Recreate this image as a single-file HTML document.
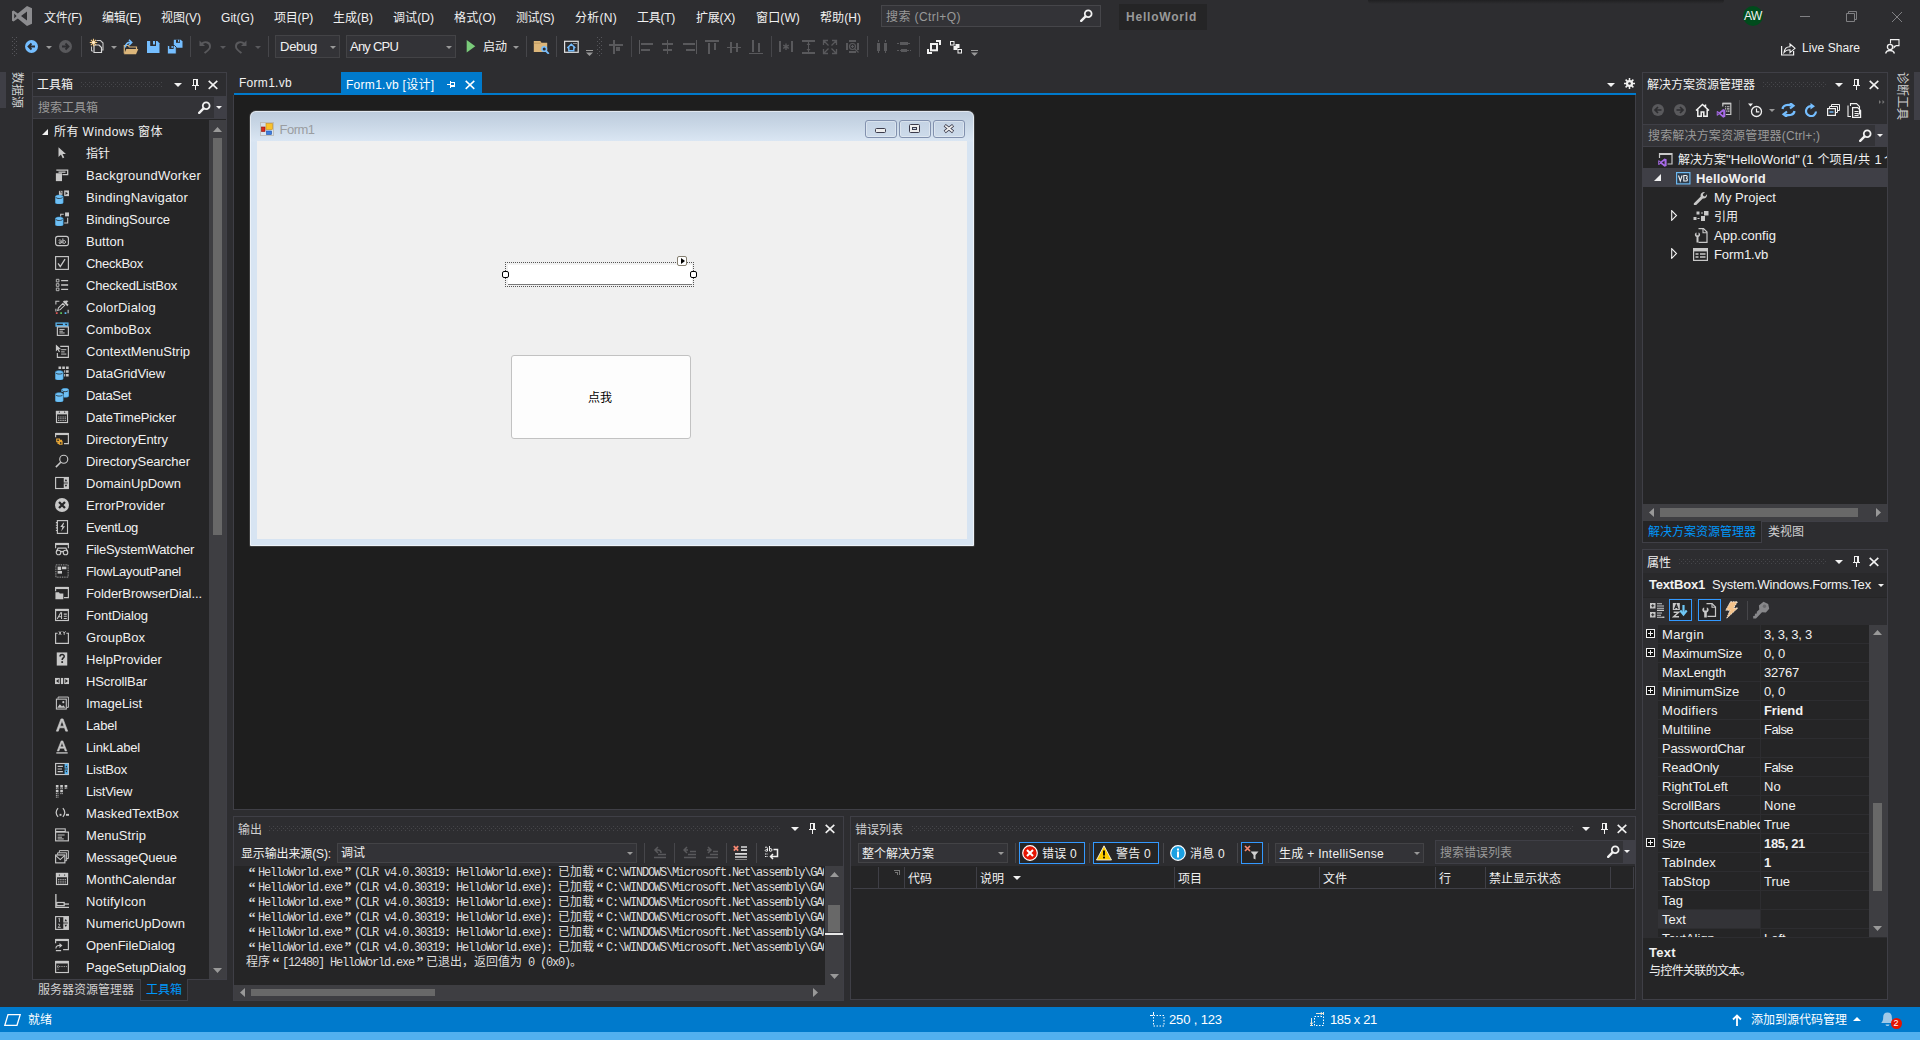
<!DOCTYPE html>
<html lang="zh-CN"><head><meta charset="utf-8"><title>HelloWorld - Microsoft Visual Studio</title>
<style>
html,body{margin:0;padding:0;}
body{width:1920px;height:1040px;overflow:hidden;background:#2d2d30;position:relative;font-family:"Liberation Sans","Noto Sans CJK SC",sans-serif;font-size:12px;color:#f1f1f1;}
.b{position:absolute;box-sizing:border-box;display:block;}
.t{position:absolute;white-space:nowrap;line-height:16px;height:16px;font-size:12px;}
.g{color:#999;}
.mono{font-family:"Liberation Mono","Noto Sans CJK SC",monospace;}
.clip{overflow:hidden;}
.ol{height:15px;line-height:15px;white-space:nowrap;overflow:hidden;color:#dcdcdc;font-size:12px;}
.ol .m{font-family:"Liberation Mono",monospace;font-size:12px;letter-spacing:-1.2px;}
.ol .c{font-family:"Liberation Sans","Noto Sans CJK SC",sans-serif;font-size:12px;}
.ol .q{display:inline-block;width:12px;text-align:center;font-family:"Liberation Serif","Noto Sans CJK SC",serif;font-size:14px;font-weight:bold;line-height:15px;vertical-align:top;}
.ol .qc{font-weight:normal;font-size:12px;}

</style></head>
<body>
<div class="b" style="left:1368px;top:0px;width:356px;height:4px;background:linear-gradient(#202022,#2d2d30);border-radius:0 0 6px 6px;"></div>
<svg class="b" style="left:11px;top:5px;" width="22" height="22" viewBox="0 0 22 22"><path d="M16 1L21 3.2V18.8L16 21L6.8 13.4L2.6 16.6L1 15.8V6.2L2.6 5.4L6.8 8.6ZM16 6.6L10 11L16 15.4ZM3.2 8.4V13.6L5.6 11Z" fill="#8c8c8f" fill-rule="evenodd"/></svg>
<span class="t" style="letter-spacing:-0.27px;left:44px;top:9.5px;">文件(F)</span>
<span class="t" style="letter-spacing:-0.20px;left:102px;top:9.5px;">编辑(E)</span>
<span class="t" style="letter-spacing:0.00px;left:161px;top:9.5px;">视图(V)</span>
<span class="t" style="letter-spacing:0.05px;left:221px;top:9.5px;">Git(G)</span>
<span class="t" style="letter-spacing:-0.20px;left:274px;top:9.5px;">项目(P)</span>
<span class="t" style="letter-spacing:0.00px;left:333px;top:9.5px;">生成(B)</span>
<span class="t" style="letter-spacing:0.07px;left:393px;top:9.5px;">调试(D)</span>
<span class="t" style="letter-spacing:0.13px;left:454px;top:9.5px;">格式(O)</span>
<span class="t" style="letter-spacing:-0.40px;left:516px;top:9.5px;">测试(S)</span>
<span class="t" style="letter-spacing:0.27px;left:575px;top:9.5px;">分析(N)</span>
<span class="t" style="letter-spacing:-0.27px;left:637px;top:9.5px;">工具(T)</span>
<span class="t" style="letter-spacing:-0.20px;left:696px;top:9.5px;">扩展(X)</span>
<span class="t" style="letter-spacing:0.13px;left:756px;top:9.5px;">窗口(W)</span>
<span class="t" style="letter-spacing:0.07px;left:820px;top:9.5px;">帮助(H)</span>
<div class="b" style="left:881px;top:5px;width:220px;height:22px;background:#333337;border:1px solid #46464a;"></div>
<span class="t" style="letter-spacing:0.42px;left:886px;top:9px;color:#999;">搜索 (Ctrl+Q)</span>
<svg class="b" style="left:1080px;top:9px;" width="13" height="13" viewBox="0 0 13 13"><circle cx="8.2" cy="4.8" r="3.4" fill="none" stroke="#f1f1f1" stroke-width="1.8"/><path d="M5.6 7.4L1.2 11.8" stroke="#f1f1f1" stroke-width="2.4" stroke-linecap="round"/></svg>
<div class="b" style="left:1119px;top:4px;width:88px;height:26px;background:#252526;"></div>
<span class="t" style="letter-spacing:0.79px;left:1126px;top:9px;color:#999;font-weight:bold;">HelloWorld</span>
<div class="b" style="left:1743px;top:6px;width:20px;height:20px;background:#004b1c;border-radius:50%;"></div>
<span class="t" style="letter-spacing:-0.45px;left:1744px;top:8px;color:#f1f1f1;">AW</span>
<div class="b" style="left:1800px;top:16px;width:10px;height:1px;background:#808083;"></div>
<svg class="b" style="left:1846px;top:11px;" width="11" height="11" viewBox="0 0 11 11"><path d="M0.5 2.5h8v8h-8zM2.5 2.5v-2h8v8h-2" fill="none" stroke="#808083"/></svg>
<svg class="b" style="left:1892px;top:12px;" width="10" height="10" viewBox="0 0 10 10"><path d="M0 0L10 10M10 0L0 10" stroke="#808083" stroke-width="1" fill="none"/></svg>
<svg class="b" style="left:12px;top:37px;" width="5" height="20" viewBox="0 0 5 20"><defs><pattern id="gp12" width="4" height="4" patternUnits="userSpaceOnUse"><rect x="0" y="0" width="1" height="1" fill="#55555a"/><rect x="2" y="2" width="1" height="1" fill="#55555a"/></pattern></defs><rect width="5" height="20" fill="url(#gp12)"/></svg>
<svg class="b" style="left:25px;top:40px;" width="13" height="13" viewBox="0 0 13 13"><circle cx="6.5" cy="6.5" r="6.5" fill="#75beff"/><path d="M10 6.5H4M6.5 3.5L3.5 6.5L6.5 9.5" stroke="#2d2d30" stroke-width="1.8" fill="none"/></svg>
<svg class="b" style="left:46px;top:46px;" width="6" height="3" viewBox="0 0 6 3"><path d="M0 0H6L3.0 3Z" fill="#999"/></svg>
<svg class="b" style="left:59px;top:40px;" width="13" height="13" viewBox="0 0 13 13"><circle cx="6.5" cy="6.5" r="6.5" fill="#59595c"/><path d="M3 6.5H9M6.5 3.5L9.5 6.5L6.5 9.5" stroke="#2d2d30" stroke-width="1.8" fill="none"/></svg>
<div class="b" style="left:81px;top:36px;width:1px;height:21px;background:#46464a;"></div>
<svg class="b" style="left:89px;top:38px;" width="15" height="16" viewBox="0 0 15 16"><path d="M7.500 2.500h4l2.500 2.500v7h-1.500" fill="none" stroke="#c8c8c8" stroke-width="1.100"/><path d="M5 7h5l2.500 2.500v5h-7.500z" fill="#2d2d30" stroke="#d8d8d8" stroke-width="1.200"/><path d="M2.500 8.500v4.500h1.500" fill="none" stroke="#c8c8c8" stroke-width="1"/><path d="M4.500 0.800v7.400M0.800 4.500h7.400M1.900 1.900l5.200 5.200M7.100 1.900l-5.200 5.200" stroke="#f0c885" stroke-width="1.100"/><circle cx="4.500" cy="4.500" r="1.300" fill="#fdf0d5"/></svg>
<svg class="b" style="left:111px;top:46px;" width="6" height="3" viewBox="0 0 6 3"><path d="M0 0H6L3.0 3Z" fill="#999"/></svg>
<svg class="b" style="left:123px;top:39px;" width="16" height="16" viewBox="0 0 16 16"><path d="M1.300 14.500v-8h4l1 1.500h7.200v2" fill="none" stroke="#dcb67a" stroke-width="1.200"/><path d="M1 15.200l2.300-5.200h12l-2.300 5.200z" fill="#dcb67a"/><path d="M2.300 8.500C2.300 4.500 5 3 8 3.500M6 0.800l2.700 2.700L6 6.200" fill="none" stroke="#75beff" stroke-width="1.600"/></svg>
<svg class="b" style="left:147px;top:41px;" width="13" height="12" viewBox="0 0 13 12"><path d="M0 0h10.300L12.500 2.200V12H0z" fill="#75beff"/><rect x="3.200" y="0" width="5.800" height="5" fill="#2d2d30"/><rect x="6" y="0" width="2" height="3.500" fill="#75beff"/></svg>
<svg class="b" style="left:167px;top:39px;" width="16" height="15" viewBox="0 0 16 15"><path d="M6.800 0.800h7l1.700 1.700v6.300h-8.700z" fill="#75beff"/><rect x="9" y="0.800" width="4" height="3" fill="#2d2d30"/><rect x="11" y="0.800" width="1.300" height="2" fill="#75beff"/><path d="M0.300 6.500h7.200l1.800 1.800v6.700h-9z" fill="#75beff" stroke="#2d2d30" stroke-width="1"/><rect x="2.300" y="7" width="4.300" height="3" fill="#2d2d30"/><rect x="4.500" y="7" width="1.300" height="2" fill="#75beff"/></svg>
<div class="b" style="left:190px;top:36px;width:1px;height:21px;background:#46464a;"></div>
<svg class="b" style="left:199px;top:40px;" width="13" height="14" viewBox="0 0 13 14"><path d="M0.500 0.500v5.500h5.500z" fill="#59595c"/><path d="M2.500 4C6 0.500 11.500 2.500 11 7C10.700 9.800 7.500 11.500 5.500 13" fill="none" stroke="#59595c" stroke-width="1.900"/></svg>
<svg class="b" style="left:220px;top:46px;" width="6" height="3" viewBox="0 0 6 3"><path d="M0 0H6L3.0 3Z" fill="#59595c"/></svg>
<svg class="b" style="left:234px;top:40px;" width="13" height="14" viewBox="0 0 13 14"><path d="M12.500 0.500v5.500h-5.500z" fill="#59595c"/><path d="M10.500 4C7 0.500 1.500 2.500 2 7C2.300 9.800 5.500 11.500 7.500 13" fill="none" stroke="#59595c" stroke-width="1.900"/></svg>
<svg class="b" style="left:255px;top:46px;" width="6" height="3" viewBox="0 0 6 3"><path d="M0 0H6L3.0 3Z" fill="#59595c"/></svg>
<div class="b" style="left:268px;top:36px;width:1px;height:21px;background:#46464a;"></div>
<div class="b" style="left:275px;top:35px;width:65px;height:23px;background:#333337;border:1px solid #434346;"></div>
<span class="t" style="letter-spacing:-0.26px;left:280px;top:38.5px;font-size:13px;">Debug</span>
<svg class="b" style="left:330px;top:46px;" width="6" height="3" viewBox="0 0 6 3"><path d="M0 0H6L3.0 3Z" fill="#999"/></svg>
<div class="b" style="left:346px;top:35px;width:110px;height:23px;background:#333337;border:1px solid #434346;"></div>
<span class="t" style="letter-spacing:-0.78px;left:350px;top:38.5px;font-size:13px;">Any CPU</span>
<svg class="b" style="left:446px;top:46px;" width="6" height="3" viewBox="0 0 6 3"><path d="M0 0H6L3.0 3Z" fill="#999"/></svg>
<svg class="b" style="left:466px;top:40px;" width="10" height="13" viewBox="0 0 10 13"><path d="M0.700 0L9.300 6.200L0.700 12.400Z" fill="#7acb7a"/></svg>
<span class="t" style="letter-spacing:-0.01px;left:483px;top:38.5px;">启动</span>
<svg class="b" style="left:513px;top:46px;" width="6" height="3" viewBox="0 0 6 3"><path d="M0 0H6L3.0 3Z" fill="#999"/></svg>
<div class="b" style="left:526px;top:36px;width:1px;height:21px;background:#46464a;"></div>
<svg class="b" style="left:533px;top:40px;" width="17" height="14" viewBox="0 0 17 14"><path d="M0.800 1h6.500l1.200 1.800h5.700v9.200h-13.400z" fill="#dcb67a"/><path d="M0.800 3.200h7" stroke="#b8935a" stroke-width="0.800"/><circle cx="11.200" cy="9" r="2.300" fill="#2d2d30" stroke="#75beff" stroke-width="1.500"/><path d="M12.800 10.800l3 3" stroke="#75beff" stroke-width="1.800"/></svg>
<div class="b" style="left:556px;top:36px;width:1px;height:21px;background:#46464a;"></div>
<svg class="b" style="left:564px;top:40px;" width="15" height="13" viewBox="0 0 15 13"><rect x="0.600" y="1.300" width="13.600" height="11" fill="none" stroke="#e0e0e0" stroke-width="1.200"/><path d="M3.300 8L7.300 4.300L11.300 8M4.800 7.300v3.500h5v-3.500" fill="none" stroke="#75beff" stroke-width="1.400"/><rect x="9.500" y="3" width="1" height="1" fill="#f1f1f1"/><rect x="11.500" y="3" width="1" height="1" fill="#f1f1f1"/></svg>
<svg class="b" style="left:586px;top:50px;" width="7" height="6" viewBox="0 0 7 6"><rect x="0" y="0" width="7" height="1" fill="#999"/><path d="M0 2.500h7l-3.500 3.500z" fill="#999"/></svg>
<svg class="b" style="left:597px;top:37px;" width="5" height="20" viewBox="0 0 5 20"><defs><pattern id="gp597" width="4" height="4" patternUnits="userSpaceOnUse"><rect x="0" y="0" width="1" height="1" fill="#55555a"/><rect x="2" y="2" width="1" height="1" fill="#55555a"/></pattern></defs><rect width="5" height="20" fill="url(#gp597)"/></svg>
<svg class="b" style="left:604px;top:36px;" width="380" height="22" viewBox="604 36 380 22"><rect x="613" y="40" width="2" height="14" fill="#59595c"/><rect x="609" y="44" width="14" height="2" fill="#59595c"/><rect x="616" y="47" width="4" height="4" fill="#59595c"/><rect x="639" y="40" width="1" height="14" fill="#59595c"/><rect x="641" y="43" width="12" height="2" fill="#59595c"/><rect x="641" y="49" width="9" height="2" fill="#59595c"/><rect x="667" y="40" width="1" height="14" fill="#59595c"/><rect x="662" y="43" width="11" height="2" fill="#59595c"/><rect x="663" y="49" width="9" height="2" fill="#59595c"/><rect x="696" y="40" width="1" height="14" fill="#59595c"/><rect x="683" y="43" width="12" height="2" fill="#59595c"/><rect x="686" y="49" width="9" height="2" fill="#59595c"/><rect x="705" y="40" width="14" height="2" fill="#59595c"/><rect x="708" y="43" width="2" height="11" fill="#59595c"/><rect x="714" y="43" width="2" height="7" fill="#59595c"/><rect x="727" y="47" width="14" height="1" fill="#59595c"/><rect x="730" y="42" width="2" height="11" fill="#59595c"/><rect x="736" y="43" width="2" height="9" fill="#59595c"/><rect x="749" y="53" width="14" height="1" fill="#59595c"/><rect x="752" y="40" width="2" height="12" fill="#59595c"/><rect x="758" y="43" width="2" height="9" fill="#59595c"/><rect x="779" y="41" width="2" height="11" fill="#59595c"/><rect x="791" y="41" width="2" height="11" fill="#59595c"/><path d="M786 43.500v6.500M783.200 45.200l5.600 3.200M788.800 45.200l-5.600 3.200" stroke="#59595c" stroke-width="1.400" fill="none"/><rect x="802" y="40" width="13" height="2" fill="#59595c"/><rect x="802" y="52" width="13" height="2" fill="#59595c"/><rect x="808" y="42" width="1" height="10" fill="#59595c"/><path d="M806.500 45l2-2.500l2 2.500zM806.500 49l2 2.500l2-2.500z" fill="#59595c"/><path d="M823.500 45v-4.500h4.500M832 40.500h4.500v4.500M836.500 49v4.500h-4.500M828 53.500h-4.500v-4.500M824 41l4.500 4.500M836 41l-4.500 4.500M824 53l4.500-4.500M836 53l-4.500-4.500" stroke="#59595c" stroke-width="1.300" fill="none"/><rect x="849" y="40" width="7" height="2" fill="#59595c"/><rect x="849" y="51" width="7" height="2" fill="#59595c"/><rect x="846" y="43" width="2" height="7" fill="#59595c"/><rect x="857" y="43" width="2" height="7" fill="#59595c"/><circle cx="852.500" cy="46.500" r="3" fill="none" stroke="#59595c" stroke-width="1.200"/><path d="M851 46.500h3M852.500 45v3M855 49l3.500 3.500" stroke="#59595c" stroke-width="1.100"/><rect x="877" y="43" width="3" height="8" fill="#59595c"/><rect x="884" y="43" width="3" height="8" fill="#59595c"/><path d="M878.500 40v3M878.500 51v3M885.500 40v3M885.500 51v3" stroke="#59595c" stroke-width="1" stroke-dasharray="2 1"/><rect x="900" y="42" width="8" height="3" fill="#59595c"/><rect x="901" y="49" width="6" height="3" fill="#59595c"/><path d="M897 43.500h3M908 43.500h3M897 50.500h4M907 50.500h4" stroke="#59595c" stroke-width="1" stroke-dasharray="2 1"/><rect x="931" y="44" width="6" height="6.300" fill="none" stroke="#f1f1f1" stroke-width="2"/><rect x="936" y="40" width="5" height="2" fill="#f1f1f1"/><rect x="939" y="40" width="2" height="5" fill="#f1f1f1"/><rect x="927" y="49" width="2" height="5" fill="#f1f1f1"/><rect x="927" y="52" width="5" height="2" fill="#f1f1f1"/><rect x="950.500" y="41.500" width="3.500" height="3.500" fill="none" stroke="#f1f1f1" stroke-width="1"/><rect x="953.5" y="46" width="4" height="4" fill="#f1f1f1"/><rect x="955.5" y="44" width="4" height="4" fill="#f1f1f1"/><rect x="958" y="49.500" width="3.500" height="3.500" fill="none" stroke="#f1f1f1" stroke-width="1"/></svg>
<div class="b" style="left:631px;top:36px;width:1px;height:21px;background:#46464a;"></div>
<div class="b" style="left:771px;top:36px;width:1px;height:21px;background:#46464a;"></div>
<div class="b" style="left:867px;top:36px;width:1px;height:21px;background:#46464a;"></div>
<div class="b" style="left:919px;top:36px;width:1px;height:21px;background:#46464a;"></div>
<svg class="b" style="left:971px;top:50px;" width="7" height="6" viewBox="0 0 7 6"><rect x="0" y="0" width="7" height="1" fill="#999"/><path d="M0 2.500h7l-3.500 3.500z" fill="#999"/></svg>
<svg class="b" style="left:1781px;top:42px;" width="15" height="14" viewBox="0 0 15 14"><path d="M0.600 4v9h12v-4" fill="none" stroke="#f1f1f1" stroke-width="1.200"/><path d="M3 10.500C3.500 6.500 6 4.800 9 4.800V2l5 4.300l-5 4.300V7.800C6.500 7.800 4.500 8.500 3 10.500z" fill="none" stroke="#f1f1f1" stroke-width="1.100"/></svg>
<span class="t" style="letter-spacing:0.06px;left:1802px;top:40px;">Live Share</span>
<svg class="b" style="left:1885px;top:39px;" width="15" height="15" viewBox="0 0 15 15"><path d="M5.500 4.500V0.600h8.500v6h-3l-2 2v-2" fill="none" stroke="#f1f1f1" stroke-width="1.100"/><circle cx="5" cy="8" r="2.600" fill="none" stroke="#f1f1f1" stroke-width="1.300"/><path d="M0.600 14.500C1.500 10.500 8.500 10.500 9.400 14.500" fill="none" stroke="#f1f1f1" stroke-width="1.300"/></svg>
<div class="b" style="left:0px;top:72px;width:6px;height:36px;background:#3f3f46;"></div>
<span class="t" style="left:9px;top:72px;transform-origin:0 0;transform:translate(16px,0) rotate(90deg);color:#d0d0d0;">数据源</span>
<div class="b" style="left:32px;top:72px;width:195px;height:908px;background:#252526;border:1px solid #3f3f46;"></div>
<div class="b" style="left:33px;top:73px;width:193px;height:23px;background:#2d2d30;"></div>
<span class="t" style="letter-spacing:-0.01px;left:37px;top:76.5px;">工具箱</span>
<svg class="b" style="left:81px;top:82px;" width="82" height="5" viewBox="0 0 82 5"><defs><pattern id="dp81_82" width="4" height="4" patternUnits="userSpaceOnUse"><rect x="0" y="0" width="1" height="1" fill="#46464a"/><rect x="2" y="2" width="1" height="1" fill="#46464a"/></pattern></defs><rect width="82" height="5" fill="url(#dp81_82)"/></svg>
<svg class="b" style="left:174px;top:83px;" width="8" height="4" viewBox="0 0 8 4"><path d="M0 0H8L4.0 4Z" fill="#f1f1f1"/></svg>
<svg class="b" style="left:192px;top:79px;" width="7" height="11" viewBox="0 0 7 11"><rect x="1" y="0" width="1" height="6" fill="#f1f1f1"/><rect x="1" y="0" width="5" height="1" fill="#f1f1f1"/><rect x="4" y="0" width="2" height="6" fill="#f1f1f1"/><rect x="0" y="6" width="7" height="1" fill="#f1f1f1"/><rect x="3" y="7" width="1" height="4" fill="#f1f1f1"/></svg>
<svg class="b" style="left:208px;top:80px;" width="10" height="10" viewBox="0 0 10 10"><path d="M0.700 0.900L9.300 8.900M9.300 0.900L0.700 8.900" stroke="#f1f1f1" stroke-width="1.5999999999999999" fill="none"/></svg>
<div class="b" style="left:33px;top:96px;width:193px;height:23px;background:#333337;border:1px solid #3f3f46;border-left:0;border-right:0;"></div>
<div class="b" style="left:214px;top:97px;width:12px;height:21px;background:#3f3f46;"></div>
<span class="t" style="letter-spacing:-0.00px;left:38px;top:99.5px;color:#999;">搜索工具箱</span>
<svg class="b" style="left:198px;top:101px;" width="13" height="13" viewBox="0 0 13 13"><circle cx="8.2" cy="4.8" r="3.4" fill="none" stroke="#f1f1f1" stroke-width="1.8"/><path d="M5.6 7.4L1.2 11.8" stroke="#f1f1f1" stroke-width="2.4" stroke-linecap="round"/></svg>
<svg class="b" style="left:216px;top:106px;" width="6" height="3" viewBox="0 0 6 3"><path d="M0 0H6L3.0 3Z" fill="#f1f1f1"/></svg>
<div class="b" style="left:209px;top:120px;width:17px;height:859px;background:#3e3e42;"></div>
<svg class="b" style="left:213px;top:127px;" width="9" height="5" viewBox="0 0 9 5"><path d="M0 5H9L4.5 0Z" fill="#999"/></svg>
<div class="b" style="left:213px;top:138px;width:9px;height:397px;background:#686868;"></div>
<svg class="b" style="left:213px;top:968px;" width="9" height="5" viewBox="0 0 9 5"><path d="M0 0H9L4.5 5Z" fill="#999"/></svg>
<svg class="b" style="left:42px;top:129px;" width="6" height="6" viewBox="0 0 6 6"><path d="M6 0V6H0Z" fill="#f1f1f1"/></svg>
<span class="t" style="letter-spacing:0.43px;left:54px;top:123.5px;">所有 Windows 窗体</span>
<svg class="b" style="left:55px;top:146px;" width="14" height="14" viewBox="0 0 16 16"><path d="M4 1.500v11l2.800-2.800l2 4.300l1.800-0.800l-2-4.200h3.900z" fill="#c8c8c8"/></svg>
<span class="t" style="letter-spacing:-0.01px;left:86px;top:145.5px;">指针</span>
<svg class="b" style="left:55px;top:168px;" width="14" height="14" viewBox="0 0 16 16"><path d="M1.500 2.500h13v5h-6" fill="none" stroke="#c8c8c8" stroke-width="1.400"/><rect x="4" y="4" width="8" height="1.500" fill="#c8c8c8"/><rect x="1" y="6" width="7" height="9" fill="#c8c8c8"/></svg>
<span class="t" style="letter-spacing:0.25px;left:86px;top:167.5px;font-size:13px;">BackgroundWorker</span>
<svg class="b" style="left:55px;top:190px;" width="14" height="14" viewBox="0 0 16 16"><path d="M0.3 7.6c0-2.4000000000000004 9-2.4000000000000004 9 0v6.8c0 2.4000000000000004-9 2.4000000000000004-9 0z" fill="#6fc0f5" stroke="#3d9bd9" stroke-width="0.600"/><path d="M1.1 8.4c0 1.7600000000000002 7.4 1.7600000000000002 7.4 0" fill="none" stroke="#252526" stroke-width="0.900"/><rect x="4.500" y="1" width="4" height="4.500" fill="#c8c8c8"/><path d="M5.500 2l1.500 0l0 2" stroke="#252526" fill="none" stroke-width="0.900"/><rect x="10.500" y="0.500" width="5.500" height="6.500" fill="#c8c8c8"/><path d="M12 2l2.800 1.800l-2.800 1.800z" fill="#252526"/></svg>
<span class="t" style="letter-spacing:0.19px;left:86px;top:189.5px;font-size:13px;">BindingNavigator</span>
<svg class="b" style="left:55px;top:212px;" width="14" height="14" viewBox="0 0 16 16"><path d="M0.3 7.6c0-2.4000000000000004 9-2.4000000000000004 9 0v6.8c0 2.4000000000000004-9 2.4000000000000004-9 0z" fill="#6fc0f5" stroke="#3d9bd9" stroke-width="0.600"/><path d="M1.1 8.4c0 1.7600000000000002 7.4 1.7600000000000002 7.4 0" fill="none" stroke="#252526" stroke-width="0.900"/><rect x="11.500" y="0.500" width="4.500" height="4.500" fill="#c8c8c8"/><path d="M6.500 5V2.500h3.500M14.500 6.500v6h-4" fill="none" stroke="#c8c8c8" stroke-width="1.200"/></svg>
<span class="t" style="letter-spacing:-0.04px;left:86px;top:211.5px;font-size:13px;">BindingSource</span>
<svg class="b" style="left:55px;top:234px;" width="14" height="14" viewBox="0 0 16 16"><rect x="0.700" y="2.700" width="14.600" height="10.600" rx="2.500" fill="none" stroke="#c8c8c8" stroke-width="1.300"/><path d="M4.200 7.300c2-1.200 3 -0.300 3 1v2.200M7.200 9c-3-0.500-3.500 1.800-1.500 1.800c0.800 0 1.500-0.600 1.500-1.200M9 5v5.800M9 8.500c0.500-1.600 3-1.600 3 0.600c0 2.200-2.500 2.200-3 0.600" fill="none" stroke="#c8c8c8" stroke-width="1.100"/></svg>
<span class="t" style="letter-spacing:0.07px;left:86px;top:233.5px;font-size:13px;">Button</span>
<svg class="b" style="left:55px;top:256px;" width="14" height="14" viewBox="0 0 16 16"><rect x="0.700" y="0.700" width="14.600" height="14.600" fill="none" stroke="#c8c8c8" stroke-width="1.300"/><path d="M3.500 8.500l2.500 3.500l5.500-8.500" fill="none" stroke="#c8c8c8" stroke-width="1.500"/></svg>
<span class="t" style="letter-spacing:-0.28px;left:86px;top:255.5px;font-size:13px;">CheckBox</span>
<svg class="b" style="left:55px;top:278px;" width="14" height="14" viewBox="0 0 16 16"><path d="M1.500 1.500h3v3h-3zM1.500 6.500h3v3h-3zM1.500 11.500h3v3h-3z" fill="none" stroke="#c8c8c8"/><path d="M7 3h8M7 8h8M7 13h8" stroke="#c8c8c8" stroke-width="1.600"/></svg>
<span class="t" style="letter-spacing:-0.21px;left:86px;top:277.5px;font-size:13px;">CheckedListBox</span>
<svg class="b" style="left:55px;top:300px;" width="14" height="14" viewBox="0 0 16 16"><path d="M1 5V1.500h4M11 1.500h4M15 11v4M1 10v3" fill="none" stroke="#c8c8c8" stroke-width="1.200" /><path d="M3 12l1-3l5-5l2 2l-5 5z" fill="none" stroke="#c8c8c8" stroke-width="1.200"/><path d="M9 2l5 5l1.500-1.500l-2-2l1-1.500l-1.500-1.500l-1.500 1l-1-1z" fill="#c8c8c8"/><rect x="1" y="14" width="2" height="2" fill="#e05555"/><rect x="6" y="14" width="2" height="2" fill="#5bc45b"/><rect x="11" y="14" width="2" height="2" fill="#59b4ee"/></svg>
<span class="t" style="letter-spacing:0.19px;left:86px;top:299.5px;font-size:13px;">ColorDialog</span>
<svg class="b" style="left:55px;top:322px;" width="14" height="14" viewBox="0 0 16 16"><rect x="0.500" y="0.500" width="15" height="5" fill="#59b4ee"/><rect x="2" y="2" width="7" height="1.500" fill="#252526"/><path d="M11 2h3.500l-1.750 2z" fill="#252526"/><rect x="2.700" y="5.700" width="12.600" height="9.600" fill="none" stroke="#c8c8c8" stroke-width="1.300"/><path d="M5 8.500h6M5 10.500h4M5 12.500h6" stroke="#c8c8c8" stroke-width="1.100"/></svg>
<span class="t" style="letter-spacing:0.09px;left:86px;top:321.5px;font-size:13px;">ComboBox</span>
<svg class="b" style="left:55px;top:344px;" width="14" height="14" viewBox="0 0 16 16"><path d="M6 2.700h9.300v12.600h-12.600v-5" fill="none" stroke="#c8c8c8" stroke-width="1.300"/><path d="M7 6.500h6M7 9h4M7 11.500h6" stroke="#c8c8c8" stroke-width="1.100"/><path d="M1 0.500v8l2-2l1.500 3l1.200-0.600l-1.500-2.900h2.800z" fill="#c8c8c8"/></svg>
<span class="t" style="letter-spacing:-0.00px;left:86px;top:343.5px;font-size:13px;">ContextMenuStrip</span>
<svg class="b" style="left:55px;top:366px;" width="14" height="14" viewBox="0 0 16 16"><path d="M0.3 7.1c0-2.4000000000000004 9-2.4000000000000004 9 0v7.3c0 2.4000000000000004-9 2.4000000000000004-9 0z" fill="#6fc0f5" stroke="#3d9bd9" stroke-width="0.600"/><path d="M1.1 7.8999999999999995c0 1.7600000000000002 7.4 1.7600000000000002 7.4 0" fill="none" stroke="#252526" stroke-width="0.900"/><path d="M4 0.500h3v3h-3zM8.300 0.500h3v3h-3zM12.600 0.500h3v3h-3zM12.600 4.800h3v3h-3zM12.600 9.100h3v3h-3zM10.500 4.800h1.200v3h-1.200zM10.500 9.100h1.200v3h-1.200z" fill="#c8c8c8"/></svg>
<span class="t" style="letter-spacing:-0.08px;left:86px;top:365.5px;font-size:13px;">DataGridView</span>
<svg class="b" style="left:55px;top:388px;" width="14" height="14" viewBox="0 0 16 16"><path d="M7.5 2.1c0-2.4000000000000004 8.3-2.4000000000000004 8.3 0v6.8c0 2.4000000000000004-8.3 2.4000000000000004-8.3 0z" fill="#6fc0f5" stroke="#3d9bd9" stroke-width="0.600"/><path d="M8.3 2.9000000000000004c0 1.7600000000000002 6.700000000000001 1.7600000000000002 6.700000000000001 0" fill="none" stroke="#252526" stroke-width="0.900"/><rect x="0" y="4.500" width="9.800" height="2.500" fill="#252526"/><rect x="8.800" y="5" width="1" height="11" fill="#252526"/><path d="M0.3 7.1c0-2.4000000000000004 9-2.4000000000000004 9 0v7.3c0 2.4000000000000004-9 2.4000000000000004-9 0z" fill="#6fc0f5" stroke="#3d9bd9" stroke-width="0.600"/><path d="M1.1 7.8999999999999995c0 1.7600000000000002 7.4 1.7600000000000002 7.4 0" fill="none" stroke="#252526" stroke-width="0.900"/></svg>
<span class="t" style="letter-spacing:-0.28px;left:86px;top:387.5px;font-size:13px;">DataSet</span>
<svg class="b" style="left:55px;top:410px;" width="14" height="14" viewBox="0 0 16 16"><rect x="1.700" y="1.700" width="12.600" height="12.600" fill="none" stroke="#c8c8c8" stroke-width="1.300"/><rect x="1" y="1" width="14" height="4" fill="#c8c8c8"/><path d="M4 2.500l1.500 1l-0 -2zM12 2.500l-1.500 1l0-2z" fill="#252526"/><path d="M3.500 8h9M3.500 10h9M3.500 12h9" stroke="#c8c8c8" stroke-width="1" stroke-dasharray="1.500 1"/></svg>
<span class="t" style="letter-spacing:-0.14px;left:86px;top:409.5px;font-size:13px;">DateTimePicker</span>
<svg class="b" style="left:55px;top:432px;" width="14" height="14" viewBox="0 0 16 16"><path d="M0.700 6V1.700h14.600v11.600h-5" fill="none" stroke="#c8c8c8" stroke-width="1.300"/><rect x="0.700" y="1" width="14.600" height="2.500" fill="#c8c8c8"/><path d="M2 8h3v3h-3zM5 11h3v3h-3zM3.500 11v2h1.500M5 9.500h2.500v1.500" fill="none" stroke="#e8a838" stroke-width="1.300"/></svg>
<span class="t" style="letter-spacing:-0.03px;left:86px;top:431.5px;font-size:13px;">DirectoryEntry</span>
<svg class="b" style="left:55px;top:454px;" width="14" height="14" viewBox="0 0 16 16"><circle cx="10" cy="6" r="4.600" fill="none" stroke="#c8c8c8" stroke-width="1.300"/><path d="M6.500 9.500l-5.500 5.500" stroke="#c8c8c8" stroke-width="1.800"/></svg>
<span class="t" style="letter-spacing:-0.05px;left:86px;top:453.5px;font-size:13px;">DirectorySearcher</span>
<svg class="b" style="left:55px;top:476px;" width="14" height="14" viewBox="0 0 16 16"><rect x="0.700" y="1.700" width="14.600" height="12.600" fill="none" stroke="#c8c8c8" stroke-width="1.300"/><rect x="10" y="2" width="5" height="5.500" fill="#c8c8c8"/><rect x="10" y="8.500" width="5" height="5.500" fill="#c8c8c8"/><path d="M11 6l1.500-2.500l1.500 2.500zM11 10l1.500 2.500l1.500-2.500z" fill="#252526"/></svg>
<span class="t" style="letter-spacing:0.03px;left:86px;top:475.5px;font-size:13px;">DomainUpDown</span>
<svg class="b" style="left:55px;top:498px;" width="14" height="14" viewBox="0 0 16 16"><circle cx="8" cy="8" r="8" fill="#c8c8c8"/><path d="M4.600 4.600l6.800 6.800M11.400 4.600l-6.800 6.800" stroke="#252526" stroke-width="2.600"/></svg>
<span class="t" style="letter-spacing:0.13px;left:86px;top:497.5px;font-size:13px;">ErrorProvider</span>
<svg class="b" style="left:55px;top:520px;" width="14" height="14" viewBox="0 0 16 16"><rect x="2.700" y="0.700" width="11.600" height="14.600" fill="none" stroke="#c8c8c8" stroke-width="1.300"/><path d="M1 3h2M1 6h2M1 9h2M1 12h2" stroke="#c8c8c8" stroke-width="1.200"/><path d="M9.500 3l-3.500 5h2.500l-1.500 5l4.500-6h-2.500l1.500-4z" fill="#c8c8c8"/></svg>
<span class="t" style="letter-spacing:-0.37px;left:86px;top:519.5px;font-size:13px;">EventLog</span>
<svg class="b" style="left:55px;top:542px;" width="14" height="14" viewBox="0 0 16 16"><path d="M0.700 7V1.700h14.600v5.300" fill="none" stroke="#c8c8c8" stroke-width="1.300"/><rect x="0.700" y="1" width="14.600" height="2.500" fill="#c8c8c8"/><circle cx="4" cy="12" r="2.600" fill="none" stroke="#c8c8c8" stroke-width="1.300"/><circle cx="12" cy="12" r="2.600" fill="none" stroke="#c8c8c8" stroke-width="1.300"/><path d="M1.500 11l2-4h9l2 4M6.500 11.500c1-1 2-1 3 0" fill="none" stroke="#c8c8c8" stroke-width="1.300"/></svg>
<span class="t" style="letter-spacing:-0.25px;left:86px;top:541.5px;font-size:13px;">FileSystemWatcher</span>
<svg class="b" style="left:55px;top:564px;" width="14" height="14" viewBox="0 0 16 16"><rect x="1" y="1" width="14" height="14" fill="none" stroke="#c8c8c8" stroke-width="1" stroke-dasharray="1 1"/><rect x="3" y="3" width="4" height="4" fill="#c8c8c8"/><rect x="8" y="3" width="5" height="3" fill="#c8c8c8"/><rect x="3" y="8" width="5" height="3" fill="#c8c8c8"/></svg>
<span class="t" style="letter-spacing:-0.32px;left:86px;top:563.5px;font-size:13px;">FlowLayoutPanel</span>
<svg class="b" style="left:55px;top:586px;" width="14" height="14" viewBox="0 0 16 16"><path d="M0.700 6V1.700h14.600v11.600h-5" fill="none" stroke="#c8c8c8" stroke-width="1.300"/><rect x="0.700" y="1" width="14.600" height="2.500" fill="#c8c8c8"/><path d="M0.500 7h4l1 1.500h4v6.500h-9z" fill="#c8c8c8"/></svg>
<span class="t" style="letter-spacing:-0.09px;left:86px;top:585.5px;font-size:13px;">FolderBrowserDial...</span>
<svg class="b" style="left:55px;top:608px;" width="14" height="14" viewBox="0 0 16 16"><rect x="0.700" y="1.700" width="14.600" height="12.600" fill="none" stroke="#c8c8c8" stroke-width="1.300"/><rect x="0.700" y="1" width="14.600" height="2.500" fill="#c8c8c8"/><path d="M2.500 12.500l4-7h1v7M4 10h3.500M10 7h3.500M10 9.500h3.500M10 12h3.500" fill="none" stroke="#c8c8c8" stroke-width="1.200"/></svg>
<span class="t" style="letter-spacing:-0.09px;left:86px;top:607.5px;font-size:13px;">FontDialog</span>
<svg class="b" style="left:55px;top:630px;" width="14" height="14" viewBox="0 0 16 16"><path d="M3 3.700h-2.300v11.600h14.600v-11.600h-2.300" fill="none" stroke="#c8c8c8" stroke-width="1.300"/><path d="M4.500 1.500l2.500 4M7 1.500l-2.500 4M9 1.500l1.500 2l1.500-2M10.500 3.500v2" fill="none" stroke="#c8c8c8" stroke-width="1.100"/></svg>
<span class="t" style="letter-spacing:0.06px;left:86px;top:629.5px;font-size:13px;">GroupBox</span>
<svg class="b" style="left:55px;top:652px;" width="14" height="14" viewBox="0 0 16 16"><rect x="2" y="0.500" width="12" height="15" fill="#c8c8c8"/><path d="M5.800 5.200c0-3 4.700-3 4.700-0.200c0 1.800-2.300 1.800-2.300 4" fill="none" stroke="#252526" stroke-width="1.800"/><rect x="7.200" y="10.500" width="2" height="2" fill="#252526"/></svg>
<span class="t" style="letter-spacing:0.07px;left:86px;top:651.5px;font-size:13px;">HelpProvider</span>
<svg class="b" style="left:55px;top:674px;" width="14" height="14" viewBox="0 0 16 16"><rect x="0" y="4.500" width="5.500" height="7" fill="#c8c8c8"/><rect x="6.700" y="4.500" width="2.600" height="7" fill="#c8c8c8"/><rect x="10.500" y="4.500" width="5.500" height="7" fill="#c8c8c8"/><path d="M4.200 5.800v4.400l-3-2.200zM11.800 5.800v4.400l3-2.200z" fill="#252526"/></svg>
<span class="t" style="letter-spacing:-0.11px;left:86px;top:673.5px;font-size:13px;">HScrollBar</span>
<svg class="b" style="left:55px;top:696px;" width="14" height="14" viewBox="0 0 16 16"><path d="M3.500 3v-1.800h11.800v11.800h-1.800" fill="none" stroke="#c8c8c8" stroke-width="1.100"/><rect x="1.600" y="3.600" width="11.300" height="11.300" fill="none" stroke="#c8c8c8" stroke-width="1.200"/><path d="M2.500 13.500l3-4l2.500 2.500l1.500-1.500l2.500 3z" fill="#c8c8c8"/><circle cx="9.500" cy="7" r="1.200" fill="#c8c8c8"/></svg>
<span class="t" style="letter-spacing:-0.04px;left:86px;top:695.5px;font-size:13px;">ImageList</span>
<svg class="b" style="left:55px;top:718px;" width="14" height="14" viewBox="0 0 16 16"><path d="M1.500 15L6.800 1h2.400L14.500 15h-2.300l-1.300-3.800H5.100L3.800 15zM5.800 9.300h4.400L8 3z" fill="#c8c8c8" stroke="#c8c8c8" stroke-width="0.700"/></svg>
<span class="t" style="letter-spacing:-0.16px;left:86px;top:717.5px;font-size:13px;">Label</span>
<svg class="b" style="left:55px;top:740px;" width="14" height="14" viewBox="0 0 16 16"><path d="M2.500 12.500L7 1h2l4.500 11.500h-2l-1.100-3H5.600l-1.100 3zM6.200 7.800h3.600L8 2.800z" fill="#c8c8c8" stroke="#c8c8c8" stroke-width="0.600"/><rect x="1.500" y="14" width="13" height="1.500" fill="#c8c8c8"/></svg>
<span class="t" style="letter-spacing:-0.18px;left:86px;top:739.5px;font-size:13px;">LinkLabel</span>
<svg class="b" style="left:55px;top:762px;" width="14" height="14" viewBox="0 0 16 16"><rect x="0.700" y="1.700" width="14.600" height="12.600" fill="none" stroke="#c8c8c8" stroke-width="1.300"/><path d="M3 5h6M3 8h5M3 11h6" stroke="#c8c8c8" stroke-width="1.300"/><rect x="11" y="2" width="4" height="5.500" fill="#59b4ee"/><rect x="11" y="8.500" width="4" height="5.500" fill="#59b4ee"/><path d="M11.800 6l1.200-2l1.200 2zM11.800 10l1.200 2l1.200-2z" fill="#252526"/></svg>
<span class="t" style="letter-spacing:-0.23px;left:86px;top:761.5px;font-size:13px;">ListBox</span>
<svg class="b" style="left:55px;top:784px;" width="14" height="14" viewBox="0 0 16 16"><path d="M1 1h3v3h-3zM6 1h3v3h-3zM11 1h3v3h-3zM1 6.500h3v3h-3zM6 6.500h3v3h-3z" fill="#c8c8c8"/><path d="M1 5h3M6 5h3M11 5h3M1 11h3M6 11h3M1 13h3M1 15h3" stroke="#c8c8c8" stroke-width="1" stroke-dasharray="1.500 0.500"/></svg>
<span class="t" style="letter-spacing:-0.27px;left:86px;top:783.5px;font-size:13px;">ListView</span>
<svg class="b" style="left:55px;top:806px;" width="14" height="14" viewBox="0 0 16 16"><path d="M3.500 2.500c-2.600 3-2.600 7 0 10M9 2.500c2.600 3 2.600 7 0 10" fill="none" stroke="#c8c8c8" stroke-width="1.400"/><rect x="5.200" y="9" width="2.200" height="2.200" fill="#c8c8c8"/><rect x="12.500" y="9" width="3.500" height="2.200" fill="#c8c8c8"/></svg>
<span class="t" style="letter-spacing:0.09px;left:86px;top:805.5px;font-size:13px;">MaskedTextBox</span>
<svg class="b" style="left:55px;top:828px;" width="14" height="14" viewBox="0 0 16 16"><rect x="0.700" y="1" width="11" height="3" fill="none" stroke="#c8c8c8" stroke-width="1.200"/><rect x="0.700" y="4.700" width="14.600" height="10" fill="none" stroke="#c8c8c8" stroke-width="1.300"/><path d="M3 8h8M3 10.500h5M3 12.500h7" stroke="#c8c8c8" stroke-width="1.100"/></svg>
<span class="t" style="letter-spacing:0.08px;left:86px;top:827.5px;font-size:13px;">MenuStrip</span>
<svg class="b" style="left:55px;top:850px;" width="14" height="14" viewBox="0 0 16 16"><path d="M5 3v-2.300h10.300v9h-2M3 5.500v-2.300h10.300v9h-2" fill="none" stroke="#c8c8c8" stroke-width="1.100"/><rect x="0.700" y="5.700" width="10.600" height="9" fill="none" stroke="#c8c8c8" stroke-width="1.300"/><path d="M1 6.500l5 4.500l5-4.500" fill="none" stroke="#c8c8c8" stroke-width="1.200"/></svg>
<span class="t" style="letter-spacing:-0.07px;left:86px;top:849.5px;font-size:13px;">MessageQueue</span>
<svg class="b" style="left:55px;top:872px;" width="14" height="14" viewBox="0 0 16 16"><rect x="1.700" y="1.700" width="12.600" height="12.600" fill="none" stroke="#c8c8c8" stroke-width="1.300"/><rect x="1" y="1" width="14" height="5" fill="#c8c8c8"/><path d="M4 3.500l1.500 1v-2zM12 3.500l-1.500 1v-2z" fill="#252526"/><path d="M3.500 8.500h9M3.500 10.500h9M3.500 12.500h9" stroke="#c8c8c8" stroke-width="1" stroke-dasharray="1.500 1"/></svg>
<span class="t" style="letter-spacing:0.09px;left:86px;top:871.5px;font-size:13px;">MonthCalendar</span>
<svg class="b" style="left:55px;top:894px;" width="14" height="14" viewBox="0 0 16 16"><path d="M1 0v15.200h15" fill="none" stroke="#c8c8c8" stroke-width="1.500"/><rect x="2" y="9.700" width="8.500" height="3.600" fill="none" stroke="#c8c8c8" stroke-width="1.400"/><path d="M10.500 11.500h5.500" stroke="#c8c8c8" stroke-width="1.500"/></svg>
<span class="t" style="letter-spacing:0.22px;left:86px;top:893.5px;font-size:13px;">NotifyIcon</span>
<svg class="b" style="left:55px;top:916px;" width="14" height="14" viewBox="0 0 16 16"><rect x="0.700" y="0.700" width="14.600" height="14.600" fill="none" stroke="#c8c8c8" stroke-width="1.300"/><rect x="9.500" y="1" width="5.500" height="6.500" fill="#c8c8c8"/><rect x="9.500" y="8.500" width="5.500" height="6.500" fill="#c8c8c8"/><path d="M10.800 6l1.500-2.500l1.500 2.500zM10.800 10l1.500 2.500l1.500-2.500z" fill="#252526"/><path d="M4 3l1-0.500v4.500M3.500 9.500c2.500-1 2.500 1 0 3.500h3" fill="none" stroke="#c8c8c8" stroke-width="1"/></svg>
<span class="t" style="letter-spacing:0.06px;left:86px;top:915.5px;font-size:13px;">NumericUpDown</span>
<svg class="b" style="left:55px;top:938px;" width="14" height="14" viewBox="0 0 16 16"><path d="M0.700 6V1.700h14.600v11.600h-6" fill="none" stroke="#c8c8c8" stroke-width="1.300"/><rect x="0.700" y="1" width="14.600" height="2.500" fill="#c8c8c8"/><path d="M1 12c0-3 3-4 6-3.500M5 6.500l2.500 2l-2.500 2.200M1 14.500h6" fill="none" stroke="#c8c8c8" stroke-width="1.300"/></svg>
<span class="t" style="letter-spacing:-0.04px;left:86px;top:937.5px;font-size:13px;">OpenFileDialog</span>
<svg class="b" style="left:55px;top:960px;" width="14" height="14" viewBox="0 0 16 16"><rect x="0.700" y="1.700" width="14.600" height="12.600" fill="none" stroke="#c8c8c8" stroke-width="1.300"/><rect x="0.700" y="1" width="14.600" height="3" fill="#c8c8c8"/><path d="M2.500 7.500h11" stroke="#c8c8c8" stroke-width="1" stroke-dasharray="1 1"/><path d="M3.500 6v6" stroke="#c8c8c8" stroke-width="1" stroke-dasharray="1 1"/></svg>
<span class="t" style="letter-spacing:-0.08px;left:86px;top:959.5px;font-size:13px;">PageSetupDialog</span>
<div class="b" style="left:140px;top:979px;width:48px;height:22px;background:#252526;border:1px solid #3f3f46;border-top:0;"></div>
<span class="t" style="letter-spacing:-0.00px;left:38px;top:981.5px;color:#d0d0d0;">服务器资源管理器</span>
<span class="t" style="letter-spacing:-0.01px;left:146px;top:981.5px;color:#0097fb;">工具箱</span>
<span class="t" style="letter-spacing:0.29px;left:239px;top:75px;">Form1.vb</span>
<div class="b" style="left:341px;top:72px;width:141px;height:21px;background:#007acc;"></div>
<span class="t" style="letter-spacing:0.29px;left:346px;top:76.6px;color:#fff;">Form1.vb [设计]</span>
<svg class="b" style="left:447px;top:81px;" width="8" height="7" viewBox="0 0 8 7"><rect x="0" y="3" width="3" height="1" fill="#fff"/><rect x="3" y="0" width="1" height="7" fill="#fff"/><rect x="4" y="1" width="4" height="1" fill="#fff"/><rect x="4" y="4" width="4" height="2" fill="#fff"/><rect x="7" y="1" width="1" height="5" fill="#fff"/></svg>
<svg class="b" style="left:465px;top:80px;" width="10" height="10" viewBox="0 0 10 10"><path d="M0.700 0.900L9.300 8.900M9.300 0.900L0.700 8.900" stroke="#fff" stroke-width="1.5" fill="none"/></svg>
<div class="b" style="left:234px;top:93px;width:1402px;height:2px;background:#007acc;"></div>
<svg class="b" style="left:1607px;top:83px;" width="8" height="4" viewBox="0 0 8 4"><path d="M0 0H8L4.0 4Z" fill="#f1f1f1"/></svg>
<svg class="b" style="left:1624px;top:78px;" width="11" height="11" viewBox="0 0 11 11"><circle cx="5.500" cy="5.500" r="2.700" fill="none" stroke="#f1f1f1" stroke-width="1.800"/><path d="M5.500 0v11M0 5.500h11M1.600 1.600l7.800 7.800M9.400 1.600l-7.800 7.800" stroke="#f1f1f1" stroke-width="1.500"/><circle cx="5.500" cy="5.500" r="1.300" fill="#2d2d30"/></svg>
<div class="b" style="left:233px;top:95px;width:1403px;height:715px;background:#1e1e1e;border-left:1px solid #3f3f46;border-right:1px solid #3f3f46;border-bottom:1px solid #3f3f46;"></div>
<div class="b" style="left:250px;top:111px;width:724px;height:435px;border-radius:6px 6px 1px 1px;background:linear-gradient(#bccbdc 0,#c9d7e6 14px,#dae6f3 30px,#d7e4f2 31px);box-shadow:inset 0 0 0 1px rgba(255,255,255,.55), 0 0 0 1px #3c3c3c;"></div>
<div class="b" style="left:257px;top:141px;width:710px;height:398px;background:#f0f0f0;"></div>
<svg class="b" style="left:260px;top:122px;" width="14" height="14" viewBox="0 0 14 14"><rect x="0.500" y="0.500" width="13" height="13" fill="#e9edf2" fill-opacity=".35" stroke="#b5b0a8" stroke-opacity=".7"/><rect x="6" y="1.500" width="6.500" height="6" fill="#f9c22b" stroke="#c98d12" stroke-width=".6"/><rect x="1.500" y="5" width="3.500" height="4.500" fill="#d92a1c" stroke="#8e1209" stroke-width=".6"/><rect x="6.500" y="9" width="5" height="3.500" fill="#3b7de0" stroke="#1c4fa8" stroke-width=".6"/></svg>
<span class="t" style="letter-spacing:-0.51px;left:279.5px;top:122px;font-size:13px;color:#9a9da1;">Form1</span>
<div class="b" style="left:865px;top:120px;width:32px;height:18px;border:1px solid #8291ae;border-radius:3px;background:linear-gradient(#c4d3e4,#cddbea);box-shadow:inset 0 0 0 1px rgba(255,255,255,.35);"></div>
<div class="b" style="left:899px;top:120px;width:32px;height:18px;border:1px solid #8291ae;border-radius:3px;background:linear-gradient(#c4d3e4,#cddbea);box-shadow:inset 0 0 0 1px rgba(255,255,255,.35);"></div>
<div class="b" style="left:933px;top:120px;width:32px;height:18px;border:1px solid #8291ae;border-radius:3px;background:linear-gradient(#c4d3e4,#cddbea);box-shadow:inset 0 0 0 1px rgba(255,255,255,.35);"></div>
<div class="b" style="left:875px;top:128px;width:11px;height:5px;background:#ededed;border:1px solid #3b3b4b;border-radius:1.500px;"></div>
<div class="b" style="left:909px;top:124px;width:11px;height:9px;background:#ededed;border:1px solid #3b3b4b;border-radius:1.500px;"></div>
<div class="b" style="left:912px;top:127px;width:5px;height:3px;background:#c9d6e6;border:1px solid #3b3b4b;"></div>
<svg class="b" style="left:942px;top:123px;" width="14" height="12" viewBox="0 0 14 12"><path d="M2.700 2.300L11.100 8.900M11.100 2.300L2.700 8.900" stroke="#3b3b4b" stroke-width="3.300"/><path d="M3.200 2.700L10.600 8.500M10.600 2.700L3.200 8.500" stroke="#f2f2f2" stroke-width="1.700"/></svg>
<div class="b" style="left:505px;top:262px;width:189px;height:25px;border:1px dotted #555;"></div>
<div class="b" style="left:508px;top:264px;width:184px;height:21px;background:#fff;border-bottom:1px solid #7a7a7a;border-top:1px solid #f3f3f3;"></div>
<div class="b" style="left:502px;top:271px;width:7px;height:7px;background:#fff;border:1px solid #000;border-radius:2px;"></div>
<div class="b" style="left:690px;top:271px;width:7px;height:7px;background:#fff;border:1px solid #000;border-radius:2px;"></div>
<div class="b" style="left:677px;top:256px;width:10px;height:10px;background:#fff;border:1px solid #857f70;border-radius:2px;"></div>
<svg class="b" style="left:681px;top:258px;" width="4" height="6" viewBox="0 0 4 6"><path d="M0 0L4 3L0 6Z" fill="#000"/></svg>
<div class="b" style="left:511px;top:355px;width:180px;height:84px;background:#fdfdfd;border:1px solid #c2c2c2;border-radius:3px;"></div>
<span class="t" style="letter-spacing:-0.01px;left:588px;top:389.8px;color:#000;">点我</span>
<div class="b" style="left:233px;top:816px;width:611px;height:185px;background:#2d2d30;border:1px solid #3f3f46;"></div>
<span class="t" style="letter-spacing:-0.01px;left:238px;top:821.5px;color:#d0d0d0;">输出</span>
<svg class="b" style="left:269px;top:826px;" width="512" height="5" viewBox="0 0 512 5"><defs><pattern id="dp269_826" width="4" height="4" patternUnits="userSpaceOnUse"><rect x="0" y="0" width="1" height="1" fill="#46464a"/><rect x="2" y="2" width="1" height="1" fill="#46464a"/></pattern></defs><rect width="512" height="5" fill="url(#dp269_826)"/></svg>
<svg class="b" style="left:791px;top:827px;" width="8" height="4" viewBox="0 0 8 4"><path d="M0 0H8L4.0 4Z" fill="#f1f1f1"/></svg>
<svg class="b" style="left:809px;top:823px;" width="7" height="11" viewBox="0 0 7 11"><rect x="1" y="0" width="1" height="6" fill="#f1f1f1"/><rect x="1" y="0" width="5" height="1" fill="#f1f1f1"/><rect x="4" y="0" width="2" height="6" fill="#f1f1f1"/><rect x="0" y="6" width="7" height="1" fill="#f1f1f1"/><rect x="3" y="7" width="1" height="4" fill="#f1f1f1"/></svg>
<svg class="b" style="left:825px;top:824px;" width="10" height="10" viewBox="0 0 10 10"><path d="M0.700 0.900L9.300 8.900M9.300 0.900L0.700 8.900" stroke="#f1f1f1" stroke-width="1.5999999999999999" fill="none"/></svg>
<span class="t" style="letter-spacing:-0.13px;left:241px;top:845.5px;">显示输出来源(S):</span>
<div class="b" style="left:337px;top:843px;width:300px;height:20px;background:#333337;border:1px solid #434346;"></div>
<span class="t" style="letter-spacing:-0.01px;left:341px;top:845px;">调试</span>
<svg class="b" style="left:627px;top:852px;" width="6" height="3" viewBox="0 0 6 3"><path d="M0 0H6L3.0 3Z" fill="#999"/></svg>
<div class="b" style="left:644px;top:843px;width:1px;height:20px;background:#46464a;"></div>
<svg class="b" style="left:652px;top:846px;" width="15" height="14" viewBox="0 0 15 14"><path d="M6 1L3 4l3 3M3 4h3c2 0 3 1 3 3" fill="none" stroke="#59595c" stroke-width="1.500"/><path d="M2 11.500h12M6 8.500h8" stroke="#59595c" stroke-width="1.500"/></svg>
<div class="b" style="left:674px;top:843px;width:1px;height:20px;background:#46464a;"></div>
<svg class="b" style="left:683px;top:846px;" width="13" height="14" viewBox="0 0 13 14"><path d="M4 1L1 4l3 3M1 4h4" fill="none" stroke="#59595c" stroke-width="1.500"/><path d="M1 11.500h12M5 8.500h8M7 5.500h6" stroke="#59595c" stroke-width="1.500"/></svg>
<svg class="b" style="left:705px;top:846px;" width="13" height="14" viewBox="0 0 13 14"><path d="M3 1l3 3l-3 3M6 4H2" fill="none" stroke="#59595c" stroke-width="1.500"/><path d="M1 11.500h12M5 8.500h8M8 5.500h5" stroke="#59595c" stroke-width="1.500"/></svg>
<div class="b" style="left:726px;top:843px;width:1px;height:20px;background:#46464a;"></div>
<svg class="b" style="left:733px;top:845px;" width="15" height="15" viewBox="0 0 15 15"><path d="M0.800 1.200l4.400 4.400M5.200 1.200l-4.400 4.400" stroke="#f48771" stroke-width="1.800"/><path d="M8 2h6M8 5.200h6M2 8.800h12M2 12h12" stroke="#dcdcdc" stroke-width="1.700"/><path d="M2 14.700h12" stroke="#dcdcdc" stroke-width="0.600"/></svg>
<div class="b" style="left:756px;top:843px;width:1px;height:20px;background:#46464a;"></div>
<svg class="b" style="left:764px;top:846px;" width="15" height="14" viewBox="0 0 15 14"><path d="M1 1.500c1-0.800 2.500-0.300 2.500 0.800v3M3.500 3.500c-2.500-0.500-3 1.800-1.200 1.800c0.700 0 1.200-0.500 1.200-1M5.500 0v5.300M5.500 3.500c0.500-1.400 2.500-1.200 2.500 0.500c0 1.600-2 1.800-2.500 0.400" fill="none" stroke="#f1f1f1" stroke-width="1"/><path d="M9.500 3.500h4v7h-7M9 8l-2.500 2.500l2.500 2.500" fill="none" stroke="#f1f1f1" stroke-width="1.500"/><path d="M1 8h3M1 10.500h3" stroke="#f1f1f1" stroke-width="1.200" stroke-dasharray="1.500 1"/></svg>
<div class="b clip" style="left:234px;top:866px;width:591px;height:119px;background:#252526;"></div>
<div class="b ol" style="left:246px;top:864.5px;width:578px;"><span class="q">“</span><span class="m">HelloWorld.exe</span><span class="q">”</span><span class="m">(CLR v4.0.30319: HelloWorld.exe): </span><span class="c">已加载</span><span class="q">“</span><span class="m">C:\WINDOWS\Microsoft.Net\assembly\GAC_MSIL</span></div>
<div class="b ol" style="left:246px;top:879.5px;width:578px;"><span class="q">“</span><span class="m">HelloWorld.exe</span><span class="q">”</span><span class="m">(CLR v4.0.30319: HelloWorld.exe): </span><span class="c">已加载</span><span class="q">“</span><span class="m">C:\WINDOWS\Microsoft.Net\assembly\GAC_MSIL</span></div>
<div class="b ol" style="left:246px;top:894.5px;width:578px;"><span class="q">“</span><span class="m">HelloWorld.exe</span><span class="q">”</span><span class="m">(CLR v4.0.30319: HelloWorld.exe): </span><span class="c">已加载</span><span class="q">“</span><span class="m">C:\WINDOWS\Microsoft.Net\assembly\GAC_MSIL</span></div>
<div class="b ol" style="left:246px;top:909.5px;width:578px;"><span class="q">“</span><span class="m">HelloWorld.exe</span><span class="q">”</span><span class="m">(CLR v4.0.30319: HelloWorld.exe): </span><span class="c">已加载</span><span class="q">“</span><span class="m">C:\WINDOWS\Microsoft.Net\assembly\GAC_MSIL</span></div>
<div class="b ol" style="left:246px;top:924.5px;width:578px;"><span class="q">“</span><span class="m">HelloWorld.exe</span><span class="q">”</span><span class="m">(CLR v4.0.30319: HelloWorld.exe): </span><span class="c">已加载</span><span class="q">“</span><span class="m">C:\WINDOWS\Microsoft.Net\assembly\GAC_MSIL</span></div>
<div class="b ol" style="left:246px;top:939.5px;width:578px;"><span class="q">“</span><span class="m">HelloWorld.exe</span><span class="q">”</span><span class="m">(CLR v4.0.30319: HelloWorld.exe): </span><span class="c">已加载</span><span class="q">“</span><span class="m">C:\WINDOWS\Microsoft.Net\assembly\GAC_MSIL</span></div>
<div class="b ol" style="left:246px;top:954.5px;width:578px;"><span class="c">程序</span><span class="q">“</span><span class="m">[12480] HelloWorld.exe</span><span class="q">”</span><span class="c">已退出</span><span class="q qc">，</span><span class="c">返回值为</span><span class="m"> 0 (0x0)</span><span class="q qc">。</span></div>
<div class="b" style="left:825px;top:866px;width:18px;height:119px;background:#3e3e42;"></div>
<svg class="b" style="left:830px;top:872px;" width="9" height="5" viewBox="0 0 9 5"><path d="M0 5H9L4.5 0Z" fill="#999"/></svg>
<div class="b" style="left:828px;top:905px;width:12px;height:27px;background:#686868;"></div>
<div class="b" style="left:825px;top:933px;width:18px;height:2px;background:#e8e8e8;"></div>
<svg class="b" style="left:830px;top:974px;" width="9" height="5" viewBox="0 0 9 5"><path d="M0 0H9L4.5 5Z" fill="#999"/></svg>
<div class="b" style="left:234px;top:985px;width:609px;height:15px;background:#3e3e42;"></div>
<svg class="b" style="left:240px;top:988px;" width="5" height="9" viewBox="0 0 5 9"><path d="M5 0V9L0 4.500Z" fill="#999"/></svg>
<div class="b" style="left:251px;top:989px;width:184px;height:7px;background:#686868;"></div>
<svg class="b" style="left:813px;top:988px;" width="5" height="9" viewBox="0 0 5 9"><path d="M0 0V9L5 4.500Z" fill="#999"/></svg>
<div class="b" style="left:850px;top:816px;width:786px;height:184px;background:#252526;border:1px solid #3f3f46;"></div>
<div class="b" style="left:851px;top:817px;width:784px;height:49px;background:#2d2d30;"></div>
<span class="t" style="letter-spacing:-0.00px;left:855px;top:821.5px;color:#d0d0d0;">错误列表</span>
<svg class="b" style="left:912px;top:826px;" width="662" height="5" viewBox="0 0 662 5"><defs><pattern id="dp912_826" width="4" height="4" patternUnits="userSpaceOnUse"><rect x="0" y="0" width="1" height="1" fill="#46464a"/><rect x="2" y="2" width="1" height="1" fill="#46464a"/></pattern></defs><rect width="662" height="5" fill="url(#dp912_826)"/></svg>
<svg class="b" style="left:1582px;top:827px;" width="8" height="4" viewBox="0 0 8 4"><path d="M0 0H8L4.0 4Z" fill="#f1f1f1"/></svg>
<svg class="b" style="left:1601px;top:823px;" width="7" height="11" viewBox="0 0 7 11"><rect x="1" y="0" width="1" height="6" fill="#f1f1f1"/><rect x="1" y="0" width="5" height="1" fill="#f1f1f1"/><rect x="4" y="0" width="2" height="6" fill="#f1f1f1"/><rect x="0" y="6" width="7" height="1" fill="#f1f1f1"/><rect x="3" y="7" width="1" height="4" fill="#f1f1f1"/></svg>
<svg class="b" style="left:1617px;top:824px;" width="10" height="10" viewBox="0 0 10 10"><path d="M0.700 0.900L9.300 8.900M9.300 0.900L0.700 8.900" stroke="#f1f1f1" stroke-width="1.5999999999999999" fill="none"/></svg>
<div class="b" style="left:858px;top:843px;width:150px;height:20px;background:#333337;border:1px solid #434346;"></div>
<span class="t" style="letter-spacing:-0.00px;left:862px;top:845.8px;">整个解决方案</span>
<svg class="b" style="left:998px;top:852px;" width="6" height="3" viewBox="0 0 6 3"><path d="M0 0H6L3.0 3Z" fill="#999"/></svg>
<div class="b" style="left:1015px;top:843px;width:1px;height:20px;background:#46464a;"></div>
<div class="b" style="left:1019px;top:842px;width:66px;height:22px;background:#252526;border:1px solid #3399ff;"></div>
<svg class="b" style="left:1022px;top:845px;" width="16" height="16" viewBox="0 0 16 16"><circle cx="8" cy="8" r="7.300" fill="#e51400" stroke="#fff" stroke-width="1.200"/><path d="M5 5l6 6M11 5l-6 6" stroke="#fff" stroke-width="2"/></svg>
<span class="t" style="letter-spacing:0.25px;left:1042px;top:845.8px;">错误 0</span>
<div class="b" style="left:1089px;top:843px;width:1px;height:20px;background:#46464a;"></div>
<div class="b" style="left:1093px;top:842px;width:66px;height:22px;background:#252526;border:1px solid #3399ff;"></div>
<svg class="b" style="left:1096px;top:845px;" width="16" height="16" viewBox="0 0 16 16"><path d="M8 0.800L15.500 15H0.500Z" fill="#ffcc00" stroke="#fff" stroke-width="0.800" stroke-linejoin="round"/><path d="M8 5.500v5" stroke="#000" stroke-width="1.800"/><rect x="7.100" y="11.600" width="1.800" height="1.800" fill="#000"/></svg>
<span class="t" style="letter-spacing:0.25px;left:1116px;top:845.8px;">警告 0</span>
<div class="b" style="left:1163px;top:843px;width:1px;height:20px;background:#46464a;"></div>
<svg class="b" style="left:1170px;top:845px;" width="16" height="16" viewBox="0 0 16 16"><circle cx="8" cy="8" r="7.300" fill="#1ba1e2" stroke="#fff" stroke-width="1.200"/><rect x="7" y="6.500" width="2" height="6" fill="#fff"/><rect x="7" y="3.500" width="2" height="2" fill="#fff"/></svg>
<span class="t" style="letter-spacing:0.25px;left:1190px;top:845.8px;">消息 0</span>
<div class="b" style="left:1237px;top:843px;width:1px;height:20px;background:#46464a;"></div>
<div class="b" style="left:1241px;top:842px;width:22px;height:22px;background:#252526;border:1px solid #3399ff;"></div>
<svg class="b" style="left:1244px;top:845px;" width="16" height="16" viewBox="0 0 16 16"><path d="M1 1l5 5M6 1l-5 5" stroke="#f48771" stroke-width="1.700"/><path d="M6.500 6.500h8l-3 3.500v4.500l-2-1v-3.500z" fill="#d0d0d0"/></svg>
<div class="b" style="left:1268px;top:843px;width:1px;height:20px;background:#46464a;"></div>
<div class="b" style="left:1275px;top:843px;width:149px;height:20px;background:#333337;border:1px solid #434346;"></div>
<span class="t" style="letter-spacing:0.31px;left:1279px;top:845.8px;">生成 + IntelliSense</span>
<svg class="b" style="left:1414px;top:852px;" width="6" height="3" viewBox="0 0 6 3"><path d="M0 0H6L3.0 3Z" fill="#999"/></svg>
<div class="b" style="left:1435px;top:840px;width:200px;height:24px;background:#333337;border:1px solid #3f3f46;border-right:0"></div>
<div class="b" style="left:1623px;top:841px;width:12px;height:22px;background:#3f3f46;"></div>
<span class="t" style="letter-spacing:-0.00px;left:1440px;top:844.7px;color:#999;">搜索错误列表</span>
<svg class="b" style="left:1607px;top:845px;" width="13" height="13" viewBox="0 0 13 13"><circle cx="8.2" cy="4.8" r="3.4" fill="none" stroke="#f1f1f1" stroke-width="1.8"/><path d="M5.6 7.4L1.2 11.8" stroke="#f1f1f1" stroke-width="2.4" stroke-linecap="round"/></svg>
<svg class="b" style="left:1624px;top:850px;" width="6" height="3" viewBox="0 0 6 3"><path d="M0 0H6L3.0 3Z" fill="#f1f1f1"/></svg>
<div class="b" style="left:853px;top:888px;width:781px;height:1px;background:#3f3f46;"></div>
<div class="b" style="left:878px;top:867px;width:1px;height:21px;background:#3f3f46;"></div>
<div class="b" style="left:904px;top:867px;width:1px;height:21px;background:#3f3f46;"></div>
<div class="b" style="left:976px;top:867px;width:1px;height:21px;background:#3f3f46;"></div>
<div class="b" style="left:1174px;top:867px;width:1px;height:21px;background:#3f3f46;"></div>
<div class="b" style="left:1319px;top:867px;width:1px;height:21px;background:#3f3f46;"></div>
<div class="b" style="left:1435px;top:867px;width:1px;height:21px;background:#3f3f46;"></div>
<div class="b" style="left:1485px;top:867px;width:1px;height:21px;background:#3f3f46;"></div>
<div class="b" style="left:1610px;top:867px;width:1px;height:21px;background:#3f3f46;"></div>
<div class="b" style="left:1633px;top:867px;width:1px;height:21px;background:#3f3f46;"></div>
<svg class="b" style="left:894px;top:870px;" width="6" height="5" viewBox="0 0 6 5"><path d="M0 0.500h6M5.500 0v5M1 2.500h3M3.500 2v3" stroke="#777" fill="none"/></svg>
<span class="t" style="letter-spacing:-0.01px;left:908px;top:870.6px;">代码</span>
<span class="t" style="letter-spacing:-0.01px;left:980px;top:870.6px;">说明</span>
<svg class="b" style="left:1013px;top:876px;" width="8" height="4" viewBox="0 0 8 4"><path d="M0 0H8L4.0 4Z" fill="#f1f1f1"/></svg>
<span class="t" style="letter-spacing:-0.01px;left:1178px;top:870.6px;">项目</span>
<span class="t" style="letter-spacing:-0.01px;left:1323px;top:870.6px;">文件</span>
<span class="t" style="letter-spacing:-0.02px;left:1439px;top:870.6px;">行</span>
<span class="t" style="letter-spacing:-0.00px;left:1489px;top:870.6px;">禁止显示状态</span>
<div class="b" style="left:1642px;top:72px;width:246px;height:450px;background:#252526;border:1px solid #3f3f46;"></div>
<div class="b" style="left:1643px;top:73px;width:244px;height:51px;background:#2d2d30;"></div>
<span class="t" style="letter-spacing:-0.00px;left:1647px;top:76.5px;">解决方案资源管理器</span>
<svg class="b" style="left:1763px;top:82px;" width="63" height="5" viewBox="0 0 63 5"><defs><pattern id="dp1763_82" width="4" height="4" patternUnits="userSpaceOnUse"><rect x="0" y="0" width="1" height="1" fill="#46464a"/><rect x="2" y="2" width="1" height="1" fill="#46464a"/></pattern></defs><rect width="63" height="5" fill="url(#dp1763_82)"/></svg>
<svg class="b" style="left:1835px;top:83px;" width="8" height="4" viewBox="0 0 8 4"><path d="M0 0H8L4.0 4Z" fill="#f1f1f1"/></svg>
<svg class="b" style="left:1853px;top:79px;" width="7" height="11" viewBox="0 0 7 11"><rect x="1" y="0" width="1" height="6" fill="#f1f1f1"/><rect x="1" y="0" width="5" height="1" fill="#f1f1f1"/><rect x="4" y="0" width="2" height="6" fill="#f1f1f1"/><rect x="0" y="6" width="7" height="1" fill="#f1f1f1"/><rect x="3" y="7" width="1" height="4" fill="#f1f1f1"/></svg>
<svg class="b" style="left:1869px;top:80px;" width="10" height="10" viewBox="0 0 10 10"><path d="M0.700 0.900L9.300 8.900M9.300 0.900L0.700 8.900" stroke="#f1f1f1" stroke-width="1.5999999999999999" fill="none"/></svg>
<svg class="b" style="left:1652px;top:104px;" width="12" height="12" viewBox="0 0 12 12"><circle cx="6" cy="6" r="6" fill="#59595c"/><path d="M9.500 6H3.500M6 3L3 6L6 9" stroke="#2d2d30" stroke-width="1.700" fill="none"/></svg>
<svg class="b" style="left:1674px;top:104px;" width="12" height="12" viewBox="0 0 12 12"><circle cx="6" cy="6" r="6" fill="#59595c"/><path d="M2.500 6H8.500M6 3L9 6L6 9" stroke="#2d2d30" stroke-width="1.700" fill="none"/></svg>
<svg class="b" style="left:1695px;top:103px;" width="15" height="14" viewBox="0 0 15 14"><path d="M1 7.500L7.500 1.500L14 7.500M2.800 6.500V13.300h3.400V9h2.600v4.300h3.400V6.500M10.500 1.500v3" fill="none" stroke="#f1f1f1" stroke-width="1.500"/></svg>
<svg class="b" style="left:1716px;top:102px;" width="16" height="16" viewBox="0 0 16 16"><path d="M6.800 4.500V1.300h8v11.200h-5" fill="none" stroke="#c8c8c8" stroke-width="1.200"/><rect x="6.800" y="0.800" width="8" height="1.600" fill="#c8c8c8"/><path d="M9 4.700h1.200M11 4.700h2.500M9 6.900h1.200M11 6.900h2.500M10 9.100h0.800M11.500 9.100h2" stroke="#c8c8c8" stroke-width="1.100"/><g transform="translate(0.300,6.600) scale(0.430)"><path d="M16 1L21 3.200V18.800L16 21L6.800 13.400L2.600 16.600L1 15.800V6.200L2.600 5.400L6.800 8.600ZM16 6.600L10 11L16 15.400ZM3.200 8.400V13.600L5.600 11Z" fill="#a66ae6" fill-rule="evenodd"/></g></svg>
<div class="b" style="left:1739px;top:100px;width:1px;height:20px;background:#46464a;"></div>
<svg class="b" style="left:1748px;top:103px;" width="15" height="15" viewBox="0 0 15 15"><circle cx="8.500" cy="8.500" r="5" fill="none" stroke="#f1f1f1" stroke-width="1.300"/><path d="M8.500 5.500v3.300h2.800" fill="none" stroke="#f1f1f1" stroke-width="1.200"/><path d="M0 0.500h5L2.500 3.500z" fill="#f1f1f1"/></svg>
<svg class="b" style="left:1769px;top:109px;" width="6" height="3" viewBox="0 0 6 3"><path d="M0 0H6L3.0 3Z" fill="#999"/></svg>
<svg class="b" style="left:1781px;top:103px;" width="15" height="14" viewBox="0 0 15 14"><path d="M1.500 6C2 2 6.500 1 10.500 2.500M9 0l3.500 2.800L9 5.500M13.500 8C13 12 8.500 13 4.500 11.500M6 14l-3.500-2.800L6 8.500" fill="none" stroke="#75beff" stroke-width="2.200"/></svg>
<svg class="b" style="left:1804px;top:103px;" width="14" height="14" viewBox="0 0 14 14"><path d="M12 8.500A5 5 0 1 1 8.500 3.300" fill="none" stroke="#75beff" stroke-width="2.200"/><path d="M6.500 0l4.500 3.300L6.500 6.500z" fill="#75beff"/></svg>
<svg class="b" style="left:1827px;top:104px;" width="13" height="12" viewBox="0 0 13 12"><path d="M4.500 2.500v-2h8v6h-2M2.500 4.500v-2h8v6h-2" fill="none" stroke="#f1f1f1" stroke-width="1"/><rect x="0.600" y="4.600" width="7.800" height="6.800" fill="none" stroke="#f1f1f1" stroke-width="1.200"/><path d="M2.500 8h4" stroke="#75beff" stroke-width="1.400"/></svg>
<svg class="b" style="left:1847px;top:103px;" width="16" height="15" viewBox="0 0 16 15"><path d="M3.500 3V0.600h6l3 3V11h-2" fill="none" stroke="#f1f1f1" stroke-width="1.100"/><path d="M1 2.500v11h3" fill="none" stroke="#f1f1f1" stroke-width="1.100"/><path d="M5.600 4.600h5l3 3V14.400h-8z" fill="none" stroke="#f1f1f1" stroke-width="1.200"/><path d="M7.500 8.500h4M7.500 10.500h4M7.500 12.500h4" stroke="#f1f1f1" stroke-width="1"/></svg>
<svg class="b" style="left:1879px;top:100px;" width="6" height="4" viewBox="0 0 6 4"><path d="M0 0l2 2l-2 2zM3.500 0l2 2l-2 2z" fill="#777"/></svg>
<div class="b" style="left:1643px;top:124px;width:244px;height:23px;background:#333337;border:1px solid #3f3f46;border-left:0;border-right:0;"></div>
<div class="b" style="left:1875px;top:125px;width:12px;height:21px;background:#3f3f46;"></div>
<span class="t" style="letter-spacing:0.16px;left:1648px;top:127.5px;color:#999;">搜索解决方案资源管理器(Ctrl+;)</span>
<svg class="b" style="left:1859px;top:129px;" width="13" height="13" viewBox="0 0 13 13"><circle cx="8.2" cy="4.8" r="3.4" fill="none" stroke="#f1f1f1" stroke-width="1.8"/><path d="M5.6 7.4L1.2 11.8" stroke="#f1f1f1" stroke-width="2.4" stroke-linecap="round"/></svg>
<svg class="b" style="left:1877px;top:134px;" width="6" height="3" viewBox="0 0 6 3"><path d="M0 0H6L3.0 3Z" fill="#f1f1f1"/></svg>
<div class="b" style="left:1643px;top:168px;width:244px;height:19px;background:#3f3f46;"></div>
<svg class="b" style="left:1658px;top:152px;" width="15" height="15" viewBox="0 0 15 15"><path d="M1.500 6V1.500h12.500v10.500h-4.500" fill="none" stroke="#c8c8c8" stroke-width="1.200"/><rect x="1.500" y="1" width="12.500" height="2" fill="#c8c8c8"/><g transform="translate(-0.200,6) scale(0.420)"><path d="M16 1L21 3.200V18.800L16 21L6.800 13.400L2.600 16.600L1 15.800V6.200L2.600 5.400L6.800 8.600ZM16 6.600L10 11L16 15.400ZM3.200 8.400V13.600L5.600 11Z" fill="#a66ae6" fill-rule="evenodd"/></g></svg>
<div class="b clip" style="left:1678px;top:151px;width:209px;height:17px;"><span class="t" style="left:0;top:0.500px;">解决方案</span><span class="t" style="letter-spacing:0.12px;left:48px;top:0.500px;font-size:13px;">"HelloWorld"</span><span class="t" style="left:124px;top:0.500px;font-size:13px;">(1</span><span class="t" style="left:139.500px;top:0.500px;">个项目</span><span class="t" style="left:175.500px;top:0.500px;font-size:13px;">/</span><span class="t" style="left:180px;top:0.500px;">共</span><span class="t" style="left:196.500px;top:0.500px;font-size:13px;">1</span><span class="t" style="left:206px;top:0.500px;">个)</span></div>
<svg class="b" style="left:1654px;top:174px;" width="7" height="7" viewBox="0 0 7 7"><path d="M7 0V7H0Z" fill="#f1f1f1"/></svg>
<svg class="b" style="left:1676px;top:171px;" width="15" height="15" viewBox="0 0 15 15"><rect x="0.600" y="1.600" width="13.300" height="11.300" fill="#2d3b4a" stroke="#6cb8f0" stroke-width="1.200"/><path d="M2.500 4.500l1.800 5.500l1.800-5.500M7.800 4.500v5.500h2.200c1.900 0 1.900-2.600 0-2.800c1.600-0.200 1.600-2.700 0-2.700z" fill="none" stroke="#f1f1f1" stroke-width="1.100"/></svg>
<span class="t" style="letter-spacing:0.16px;left:1696px;top:170.5px;font-size:13px;font-weight:bold;">HelloWorld</span>
<svg class="b" style="left:1693px;top:190px;" width="15" height="15" viewBox="0 0 15 15"><path d="M14 4.200c0.500 2.500-1.500 4.800-4.200 4.200L3 15.200c-1.200 1-3-0.600-2-2L7.700 6.500C7 3.500 9.500 1.500 12 2L9.800 4.300l0.500 1.700l1.700 0.500z" fill="#c8c8c8"/></svg>
<span class="t" style="letter-spacing:0.06px;left:1714px;top:189.5px;font-size:13px;">My Project</span>
<svg class="b" style="left:1671px;top:210px;" width="7" height="11" viewBox="0 0 7 11"><path d="M0.700 0.700L5.500 5.500L0.700 10.300Z" fill="none" stroke="#f1f1f1" stroke-width="1.100"/></svg>
<svg class="b" style="left:1693px;top:211px;" width="16" height="10" viewBox="0 0 16 10"><rect x="3.500" y="0.500" width="3" height="3" fill="#c8c8c8"/><rect x="8" y="1.500" width="2" height="1" fill="#c8c8c8"/><rect x="11" y="0" width="4.500" height="4.500" fill="#c8c8c8"/><rect x="0.500" y="6" width="3" height="3" fill="#c8c8c8"/><rect x="4.500" y="7" width="2" height="1" fill="#c8c8c8"/><rect x="8" y="5" width="4" height="5" fill="#c8c8c8"/></svg>
<span class="t" style="letter-spacing:-0.01px;left:1714px;top:208.5px;">引用</span>
<svg class="b" style="left:1693px;top:228px;" width="15" height="15" viewBox="0 0 15 15"><path d="M5.500 0.600h5l3.500 3.500V14.400H5.500" fill="none" stroke="#c8c8c8" stroke-width="1.200"/><path d="M10 0.800v4h4" fill="none" stroke="#c8c8c8" stroke-width="1.100"/><path d="M5.500 4.500c2 0.500 2.300 3.500 0 4.500v5.500h-2V9c-2.300-1-2-4 0-4.500v2.700h2z" fill="#c8c8c8"/></svg>
<span class="t" style="letter-spacing:0.06px;left:1714px;top:227.5px;font-size:13px;">App.config</span>
<svg class="b" style="left:1671px;top:248px;" width="7" height="11" viewBox="0 0 7 11"><path d="M0.700 0.700L5.500 5.500L0.700 10.300Z" fill="none" stroke="#f1f1f1" stroke-width="1.100"/></svg>
<svg class="b" style="left:1693px;top:248px;" width="15" height="13" viewBox="0 0 15 13"><rect x="0.600" y="0.600" width="13.800" height="11.800" fill="none" stroke="#c8c8c8" stroke-width="1.200"/><rect x="0.600" y="0.600" width="13.800" height="2.800" fill="#c8c8c8"/><path d="M2.500 6h3M2.500 9h3M7 6h5.500M7 9h5.500" stroke="#c8c8c8" stroke-width="1.300"/></svg>
<span class="t" style="letter-spacing:-0.11px;left:1714px;top:246.5px;font-size:13px;">Form1.vb</span>
<div class="b" style="left:1643px;top:504px;width:244px;height:17px;background:#3e3e42;"></div>
<svg class="b" style="left:1649px;top:508px;" width="5" height="9" viewBox="0 0 5 9"><path d="M5 0V9L0 4.500Z" fill="#999"/></svg>
<div class="b" style="left:1660px;top:508px;width:198px;height:9px;background:#686868;"></div>
<svg class="b" style="left:1876px;top:508px;" width="5" height="9" viewBox="0 0 5 9"><path d="M0 0V9L5 4.500Z" fill="#999"/></svg>
<div class="b" style="left:1642px;top:521px;width:120px;height:22px;background:#252526;border:1px solid #3f3f46;border-top:0;"></div>
<span class="t" style="letter-spacing:-0.00px;left:1648px;top:523.5px;color:#0097fb;">解决方案资源管理器</span>
<span class="t" style="letter-spacing:-0.01px;left:1768px;top:523.5px;color:#d0d0d0;">类视图</span>
<div class="b" style="left:1914px;top:72px;width:6px;height:48px;background:#3f3f46;"></div>
<span class="t" style="left:1894px;top:72px;transform-origin:0 0;transform:translate(16px,0) rotate(90deg);color:#d0d0d0;">诊断工具</span>
<div class="b" style="left:1642px;top:549px;width:246px;height:451px;background:#252526;border:1px solid #3f3f46;"></div>
<div class="b" style="left:1643px;top:550px;width:244px;height:23px;background:#2d2d30;"></div>
<span class="t" style="letter-spacing:-0.01px;left:1647px;top:554.5px;">属性</span>
<svg class="b" style="left:1679px;top:559px;" width="147" height="5" viewBox="0 0 147 5"><defs><pattern id="dp1679_559" width="4" height="4" patternUnits="userSpaceOnUse"><rect x="0" y="0" width="1" height="1" fill="#46464a"/><rect x="2" y="2" width="1" height="1" fill="#46464a"/></pattern></defs><rect width="147" height="5" fill="url(#dp1679_559)"/></svg>
<svg class="b" style="left:1835px;top:560px;" width="8" height="4" viewBox="0 0 8 4"><path d="M0 0H8L4.0 4Z" fill="#f1f1f1"/></svg>
<svg class="b" style="left:1853px;top:556px;" width="7" height="11" viewBox="0 0 7 11"><rect x="1" y="0" width="1" height="6" fill="#f1f1f1"/><rect x="1" y="0" width="5" height="1" fill="#f1f1f1"/><rect x="4" y="0" width="2" height="6" fill="#f1f1f1"/><rect x="0" y="6" width="7" height="1" fill="#f1f1f1"/><rect x="3" y="7" width="1" height="4" fill="#f1f1f1"/></svg>
<svg class="b" style="left:1869px;top:557px;" width="10" height="10" viewBox="0 0 10 10"><path d="M0.700 0.900L9.300 8.900M9.300 0.900L0.700 8.900" stroke="#f1f1f1" stroke-width="1.5999999999999999" fill="none"/></svg>
<div class="b" style="left:1643px;top:573px;width:244px;height:24px;background:#29292b;"></div>
<span class="t" style="letter-spacing:-0.20px;left:1649px;top:576.5px;font-size:13px;font-weight:bold;">TextBox1</span>
<span class="t" style="letter-spacing:-0.21px;left:1712px;top:576.5px;font-size:13px;">System.Windows.Forms.Tex</span>
<svg class="b" style="left:1878px;top:584px;" width="6" height="3" viewBox="0 0 6 3"><path d="M0 0H6L3.0 3Z" fill="#f1f1f1"/></svg>
<div class="b" style="left:1643px;top:598px;width:244px;height:27px;background:#2d2d30;"></div>
<svg class="b" style="left:1650px;top:603px;" width="15" height="15" viewBox="0 0 15 15"><rect x="0" y="0" width="5.500" height="5.500" fill="#c8c8c8"/><rect x="0" y="9" width="5.500" height="5.500" fill="#c8c8c8"/><path d="M1.200 2.750h3.100M2.750 1.200v3.100M1.200 11.750h3.100M2.750 10.200v3.100" stroke="#2d2d30" stroke-width="1.100"/><path d="M7 0.800h5M7 3h7M7 5.200h7M7 7.400h7M7 10h5M7 12.200h4M7 14.200h7" stroke="#c8c8c8" stroke-width="1.100" fill="none"/><path d="M12.500 14.200h2" stroke="#c8c8c8" stroke-width="1.100"/></svg>
<div class="b" style="left:1669px;top:599px;width:23px;height:22px;background:#252526;border:1px solid #3399ff;"></div>
<svg class="b" style="left:1672px;top:602px;" width="16" height="16" viewBox="0 0 16 16"><rect x="0.800" y="1" width="7" height="7" fill="#c8c8c8"/><path d="M2.500 7L4.300 2.500L6.100 7M3.200 5.400h2.200" fill="none" stroke="#252526" stroke-width="1.100"/><path d="M1.600 10.300h5L1.600 14.800h5.400" fill="none" stroke="#c8c8c8" stroke-width="1.500"/><path d="M11.500 3v9" stroke="#6fc8f5" stroke-width="2.200"/><path d="M8.300 8.500l3.200 4l3.200-4" fill="none" stroke="#6fc8f5" stroke-width="2.200"/></svg>
<div class="b" style="left:1695px;top:601px;width:1px;height:19px;background:#222224;"></div>
<div class="b" style="left:1698px;top:599px;width:23px;height:22px;background:#252526;border:1px solid #3399ff;"></div>
<svg class="b" style="left:1701px;top:602px;" width="16" height="16" viewBox="0 0 16 16"><path d="M5.500 1.600h5.500l3.500 3.500V14.400H6.500" fill="none" stroke="#c8c8c8" stroke-width="1.200"/><path d="M11 1.500v3.800h3.500" fill="none" stroke="#c8c8c8" stroke-width="1.100"/><path d="M5.800 5.500c2.300 0.600 2.600 3.800 0 5v5h-2.600v-5c-2.600-1.200-2.300-4.400 0-5v3h2.600z" fill="#c8c8c8"/></svg>
<svg class="b" style="left:1724px;top:601px;" width="16" height="18" viewBox="0 0 16 18"><path d="M6.500 0.800h7L9.500 7h4.300L2.800 17.200L6 9.200H1.800z" fill="#f5c38a" stroke="#fbf1e4" stroke-width="0.900" stroke-dasharray="1.600 0.800"/></svg>
<div class="b" style="left:1747px;top:601px;width:1px;height:19px;background:#46464a;"></div>
<svg class="b" style="left:1752px;top:601px;" width="18" height="18" viewBox="0 0 18 18"><path d="M11.500 0.800l4.700 2.200l1 4.700l-3.300 3.800l-3.900-0.300L4 17.600H1.200V15l1.700-0.300v-1.900l1.900-0.200v-1.800L7.300 8.500L6.900 4.600z" fill="#87878a"/><circle cx="12.500" cy="5.300" r="1.700" fill="#6a6a6d"/></svg>
<div class="b" style="left:1643px;top:625px;width:15px;height:312px;background:#2d2d30;"></div>
<div class="b clip" style="left:1658px;top:625px;width:211px;height:312px;background:#252526;"></div>
<div class="b" style="left:1658px;top:643px;width:211px;height:1px;background:#2d2d30;"></div>
<svg class="b" style="left:1646px;top:629px;" width="9" height="9" viewBox="0 0 9 9"><rect x="0.500" y="0.500" width="8" height="8" fill="#101010" stroke="#f1f1f1"/><path d="M2 4.500h5M4.500 2v5" stroke="#f1f1f1"/></svg>
<span class="t" style="letter-spacing:0.38px;left:1662px;top:626.5px;font-size:13px;">Margin</span>
<span class="t" style="letter-spacing:-0.26px;left:1764px;top:626.5px;font-size:13px;">3, 3, 3, 3</span>
<div class="b" style="left:1658px;top:662px;width:211px;height:1px;background:#2d2d30;"></div>
<svg class="b" style="left:1646px;top:648px;" width="9" height="9" viewBox="0 0 9 9"><rect x="0.500" y="0.500" width="8" height="8" fill="#101010" stroke="#f1f1f1"/><path d="M2 4.500h5M4.500 2v5" stroke="#f1f1f1"/></svg>
<span class="t" style="letter-spacing:-0.15px;left:1662px;top:645.5px;font-size:13px;">MaximumSize</span>
<span class="t" style="letter-spacing:-0.17px;left:1764px;top:645.5px;font-size:13px;">0, 0</span>
<div class="b" style="left:1658px;top:681px;width:211px;height:1px;background:#2d2d30;"></div>
<span class="t" style="letter-spacing:-0.04px;left:1662px;top:664.5px;font-size:13px;">MaxLength</span>
<span class="t" style="letter-spacing:-0.23px;left:1764px;top:664.5px;font-size:13px;">32767</span>
<div class="b" style="left:1658px;top:700px;width:211px;height:1px;background:#2d2d30;"></div>
<svg class="b" style="left:1646px;top:686px;" width="9" height="9" viewBox="0 0 9 9"><rect x="0.500" y="0.500" width="8" height="8" fill="#101010" stroke="#f1f1f1"/><path d="M2 4.500h5M4.500 2v5" stroke="#f1f1f1"/></svg>
<span class="t" style="letter-spacing:-0.09px;left:1662px;top:683.5px;font-size:13px;">MinimumSize</span>
<span class="t" style="letter-spacing:-0.17px;left:1764px;top:683.5px;font-size:13px;">0, 0</span>
<div class="b" style="left:1658px;top:719px;width:211px;height:1px;background:#2d2d30;"></div>
<span class="t" style="letter-spacing:0.36px;left:1662px;top:702.5px;font-size:13px;">Modifiers</span>
<span class="t" style="letter-spacing:-0.12px;left:1764px;top:702.5px;font-size:13px;font-weight:bold;">Friend</span>
<div class="b" style="left:1658px;top:738px;width:211px;height:1px;background:#2d2d30;"></div>
<span class="t" style="letter-spacing:0.15px;left:1662px;top:721.5px;font-size:13px;">Multiline</span>
<span class="t" style="letter-spacing:-0.56px;left:1764px;top:721.5px;font-size:13px;">False</span>
<div class="b" style="left:1658px;top:757px;width:211px;height:1px;background:#2d2d30;"></div>
<span class="t" style="letter-spacing:-0.19px;left:1662px;top:740.5px;font-size:13px;">PasswordChar</span>
<div class="b" style="left:1658px;top:776px;width:211px;height:1px;background:#2d2d30;"></div>
<span class="t" style="letter-spacing:-0.10px;left:1662px;top:759.5px;font-size:13px;">ReadOnly</span>
<span class="t" style="letter-spacing:-0.56px;left:1764px;top:759.5px;font-size:13px;">False</span>
<div class="b" style="left:1658px;top:795px;width:211px;height:1px;background:#2d2d30;"></div>
<span class="t" style="letter-spacing:0.02px;left:1662px;top:778.5px;font-size:13px;">RightToLeft</span>
<span class="t" style="letter-spacing:0.19px;left:1764px;top:778.5px;font-size:13px;">No</span>
<div class="b" style="left:1658px;top:814px;width:211px;height:1px;background:#2d2d30;"></div>
<span class="t" style="letter-spacing:-0.12px;left:1662px;top:797.5px;font-size:13px;">ScrollBars</span>
<span class="t" style="letter-spacing:0.23px;left:1764px;top:797.5px;font-size:13px;">None</span>
<div class="b" style="left:1658px;top:833px;width:211px;height:1px;background:#2d2d30;"></div>
<div class="b clip" style="left:1662px;top:815px;width:98px;height:19px;"><span class="t" style="letter-spacing:-0.04px;left:0;top:1.500px;font-size:13px;">ShortcutsEnabled</span></div>
<span class="t" style="letter-spacing:-0.06px;left:1764px;top:816.5px;font-size:13px;">True</span>
<div class="b" style="left:1658px;top:852px;width:211px;height:1px;background:#2d2d30;"></div>
<svg class="b" style="left:1646px;top:838px;" width="9" height="9" viewBox="0 0 9 9"><rect x="0.500" y="0.500" width="8" height="8" fill="#101010" stroke="#f1f1f1"/><path d="M2 4.500h5M4.500 2v5" stroke="#f1f1f1"/></svg>
<span class="t" style="letter-spacing:-0.57px;left:1662px;top:835.5px;font-size:13px;">Size</span>
<span class="t" style="letter-spacing:-0.34px;left:1764px;top:835.5px;font-size:13px;font-weight:bold;">185, 21</span>
<div class="b" style="left:1658px;top:871px;width:211px;height:1px;background:#2d2d30;"></div>
<span class="t" style="letter-spacing:0.15px;left:1662px;top:854.5px;font-size:13px;">TabIndex</span>
<span class="t" style="letter-spacing:-1.23px;left:1764px;top:854.5px;font-size:13px;font-weight:bold;">1</span>
<div class="b" style="left:1658px;top:890px;width:211px;height:1px;background:#2d2d30;"></div>
<span class="t" style="letter-spacing:0.04px;left:1662px;top:873.5px;font-size:13px;">TabStop</span>
<span class="t" style="letter-spacing:-0.06px;left:1764px;top:873.5px;font-size:13px;">True</span>
<div class="b" style="left:1658px;top:909px;width:211px;height:1px;background:#2d2d30;"></div>
<span class="t" style="letter-spacing:0.01px;left:1662px;top:892.5px;font-size:13px;">Tag</span>
<div class="b" style="left:1658px;top:910px;width:102px;height:18px;background:#333337;"></div>
<div class="b" style="left:1658px;top:928px;width:211px;height:1px;background:#2d2d30;"></div>
<span class="t" style="letter-spacing:0.04px;left:1662px;top:911.5px;font-size:13px;">Text</span>
<div class="b clip" style="left:1658px;top:929px;width:211px;height:8px;"><span class="t" style="left:4px;top:1.500px;font-size:13px;">TextAlign</span><span class="t" style="left:106px;top:1.500px;font-size:13px;">Left</span></div>
<div class="b" style="left:1760px;top:625px;width:1px;height:312px;background:#2d2d30;"></div>
<div class="b" style="left:1869px;top:625px;width:18px;height:312px;background:#3e3e42;"></div>
<svg class="b" style="left:1873px;top:630px;" width="9" height="5" viewBox="0 0 9 5"><path d="M0 5H9L4.5 0Z" fill="#999"/></svg>
<div class="b" style="left:1873px;top:803px;width:9px;height:88px;background:#686868;"></div>
<svg class="b" style="left:1873px;top:926px;" width="9" height="5" viewBox="0 0 9 5"><path d="M0 0H9L4.5 5Z" fill="#999"/></svg>
<div class="b" style="left:1643px;top:937px;width:244px;height:62px;background:#252526;border-top:1px solid #2d2d30;"></div>
<span class="t" style="letter-spacing:0.31px;left:1649px;top:944.5px;font-size:13px;font-weight:bold;">Text</span>
<span class="t" style="letter-spacing:-0.67px;left:1649px;top:963px;">与控件关联的文本。</span>
<div class="b" style="left:0px;top:1007px;width:1920px;height:25px;background:#007acc;"></div>
<div class="b" style="left:0px;top:1032px;width:1920px;height:8px;background:#52b0ef;"></div>
<svg class="b" style="left:4px;top:1014px;" width="17" height="12" viewBox="0 0 17 12"><path d="M4 0.700H16.200L13 11.300H0.800Z" fill="none" stroke="#fff" stroke-width="1.300"/></svg>
<span class="t" style="letter-spacing:-0.01px;left:28px;top:1011.5px;color:#fff;">就绪</span>
<svg class="b" style="left:1150px;top:1012px;" width="15" height="15" viewBox="0 0 15 15"><path d="M3.500 0v3M0 3.500h3" stroke="#fff" stroke-width="1"/><rect x="3.500" y="3.500" width="10.500" height="10.500" fill="none" stroke="#fff" stroke-width="1" stroke-dasharray="1.500 1.500"/></svg>
<span class="t" style="letter-spacing:-0.14px;left:1169px;top:1011.5px;font-size:13px;color:#fff;">250 , 123</span>
<svg class="b" style="left:1310px;top:1012px;" width="15" height="15" viewBox="0 0 15 15"><rect x="4.500" y="4.500" width="9" height="9" fill="none" stroke="#fff" stroke-width="1" stroke-dasharray="1.500 1.500"/><path d="M6 1.500h7M10.500 0l2 1.500l-2 1.500M13.500 0v3M1.500 6v7M0 10.500l1.500 2l1.500-2M0 13.500h3" fill="none" stroke="#f0e8d8" stroke-width="1"/></svg>
<span class="t" style="letter-spacing:-0.36px;left:1330px;top:1011.5px;font-size:13px;color:#fff;">185 x 21</span>
<svg class="b" style="left:1732px;top:1014px;" width="10" height="12" viewBox="0 0 10 12"><path d="M5 1.500V12M1 5.500L5 1.500L9 5.500" fill="none" stroke="#fff" stroke-width="1.800"/></svg>
<span class="t" style="letter-spacing:-0.00px;left:1751px;top:1011.5px;color:#fff;">添加到源代码管理</span>
<svg class="b" style="left:1853px;top:1017px;" width="8" height="4" viewBox="0 0 8 4"><path d="M0 4H8L4.0 0Z" fill="#fff"/></svg>
<svg class="b" style="left:1881px;top:1012px;" width="13" height="15" viewBox="0 0 13 15"><path d="M6.500 0.500c3 0 4.300 2 4.300 4.500c0 3 0.600 4.500 2 6H0.200c1.400-1.500 2-3 2-6c0-2.500 1.300-4.500 4.300-4.500z" fill="#9fc9e8"/><path d="M4.500 12.500c0.500 2 3.500 2 4 0z" fill="#9fc9e8"/></svg>
<div class="b" style="left:1891px;top:1018px;width:11px;height:11px;background:#e51400;border-radius:50%;"></div>
<span class="t" style="left:1893.5px;top:1018px;font-size:9px;line-height:11px;height:11px;color:#fff;">2</span>
</body></html>
